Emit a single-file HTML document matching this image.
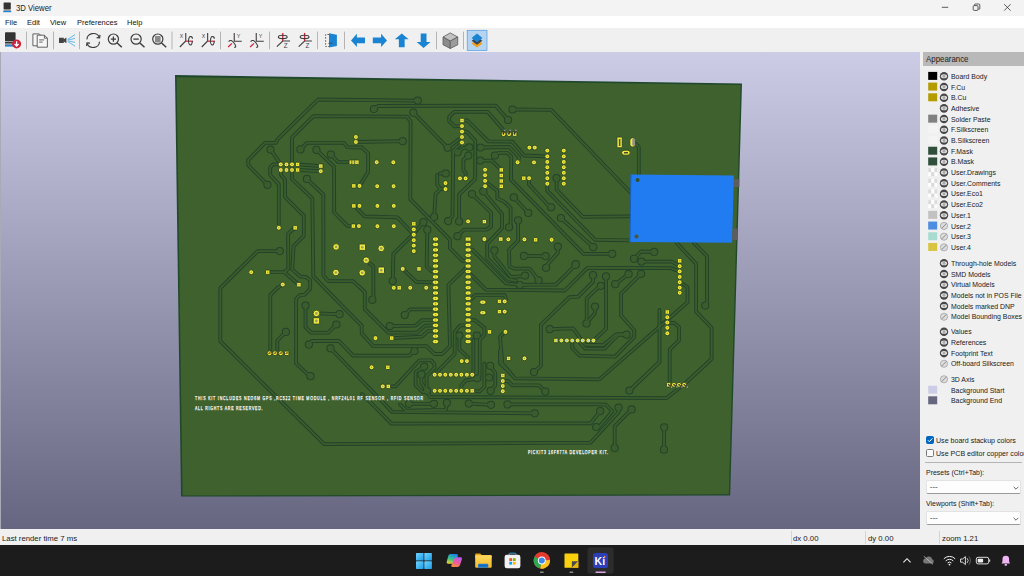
<!DOCTYPE html>
<html><head><meta charset="utf-8"><title>3D Viewer</title>
<style>
*{box-sizing:border-box;margin:0;padding:0}
html,body{width:1024px;height:576px;overflow:hidden;background:#f0f0f0;font-family:"Liberation Sans",sans-serif;color:#1a1a1a}
#title{position:absolute;left:0;top:0;width:1024px;height:16px;background:#f3f3f3}
#title .t{position:absolute;left:15.6px;top:3px;font-size:8.3px;line-height:10px;color:#222;transform:scaleX(.934);transform-origin:0 50%;white-space:nowrap}
#menu{position:absolute;left:0;top:16px;width:1024px;height:12px;background:#fff}
#menu span{position:absolute;top:1.6px;font-size:7.9px;line-height:10px;color:#111;transform:scaleX(.95);transform-origin:0 50%;white-space:nowrap}
#tool{position:absolute;left:0;top:28px;width:1024px;height:24px;background:#f0f0f0}
#canvas{position:absolute;left:1px;top:52px;width:919px;height:477px;background:linear-gradient(#cccce6,#666680)}
#panel{position:absolute;left:923px;top:52px;width:101px;height:478px;background:#f0f0f0;overflow:hidden}
#panel .hd{position:absolute;left:0;top:0;width:101px;height:14px;background:#b9b9b9}
#panel .hd span{position:absolute;left:2.5px;top:2.3px;font-size:8.4px;line-height:10px;color:#222;transform:scaleX(.94);transform-origin:0 50%;white-space:nowrap}
.row{position:absolute;left:0;height:10px;width:130px;font-size:7.9px;line-height:10px;white-space:nowrap;color:#1a1a1a}
.row .sw{position:absolute;left:5px;top:1px;width:9px;height:8px}
.row .tx{position:absolute;left:27.8px;top:1px;transform:scaleX(.875);transform-origin:0 50%}
#status{position:absolute;left:0;top:530px;width:1024px;height:15px;background:#f0f0f0;font-size:8px;line-height:10px}
#status i{position:absolute;top:1px;width:0.8px;height:13px;background:#d4d4d4}
#status span{position:absolute;top:3.6px;transform:scaleX(.97);transform-origin:0 50%;white-space:nowrap}
.cb{position:absolute;left:3px;width:8.4px;height:8.4px;border:0.7px solid #7a7a7a;border-radius:1.6px}
.lb{position:absolute;transform:scaleX(.87);transform-origin:0 50%;font-size:8px;line-height:10px;white-space:nowrap;color:#1a1a1a}
.dd{position:absolute;left:3.2px;width:95.2px;height:13.6px;background:#fdfdfd;border:0.6px solid #e2e2e2;border-bottom-color:#9a9a9a;border-radius:2px;font-size:8px;line-height:11px}
.dd span{position:absolute;left:2.6px;top:0px;color:#333}
.dd svg{position:absolute;right:1.6px;top:4.6px}
#task{position:absolute;left:0;top:545px;width:1024px;height:31px;background:#1c1c1c}
</style></head><body>
<div id="title"><svg width="1024" height="16" viewBox="0 0 1024 16" style="position:absolute;left:0;top:0">
<rect x="3.6" y="2.6" width="7.2" height="6.6" rx="0.6" fill="#333"/><rect x="3.6" y="9.6" width="7.2" height="0.9" fill="#444"/><rect x="3.2" y="10.9" width="8" height="1.3" fill="#1f86d6"/>
<g stroke="#333" stroke-width="0.8" fill="none"><path d="M941.8 7.3h6.4"/><rect x="973.2" y="5.6" width="4.8" height="4.8" rx="1"/><path d="M974.6 5.6v-1q0-.6.6-.6h3.6q1 0 1 1v3.6q0 .6-.6.6h-1"/><path d="M1004.2 4.2l6.4 6.4M1010.6 4.2l-6.4 6.4"/></g>
</svg><span class="t">3D Viewer</span></div>
<div id="menu"><span style="left:5px">File</span><span style="left:27px">Edit</span><span style="left:50px">View</span><span style="left:77px">Preferences</span><span style="left:127px">Help</span></div>
<div id="tool"><svg width="1024" height="24" viewBox="0 28 1024 24" style="position:absolute;left:0;top:0">
<rect x="26.1" y="31.6" width="0.8" height="17.6" fill="#a6a6a6"/>
<rect x="53.0" y="31.6" width="0.8" height="17.6" fill="#a6a6a6"/>
<rect x="79.0" y="31.6" width="0.8" height="17.6" fill="#a6a6a6"/>
<rect x="171.6" y="31.6" width="0.8" height="17.6" fill="#a6a6a6"/>
<rect x="220.1" y="31.6" width="0.8" height="17.6" fill="#a6a6a6"/>
<rect x="269.0" y="31.6" width="0.8" height="17.6" fill="#a6a6a6"/>
<rect x="317.1" y="31.6" width="0.8" height="17.6" fill="#a6a6a6"/>
<rect x="344.0" y="31.6" width="0.8" height="17.6" fill="#a6a6a6"/>
<rect x="436.1" y="31.6" width="0.8" height="17.6" fill="#a6a6a6"/>
<rect x="463.20000000000005" y="31.6" width="0.8" height="17.6" fill="#a6a6a6"/>
<rect x="5" y="32.2" width="10.6" height="9" rx="0.8" fill="#333"/><rect x="5" y="41.8" width="10" height="1.2" fill="#333"/><rect x="5" y="43.4" width="9" height="1.1" fill="#444"/><rect x="5" y="44.8" width="8.4" height="1.8" fill="#1f86d6"/>
<circle cx="16.6" cy="43.9" r="4.5" fill="#d0213c"/><path d="M16.6 41.2v4.4M14.6 44l2 2.1 2-2.1" stroke="#fff" stroke-width="1.3" fill="none"/>
<g fill="#f6f6f6" stroke="#555" stroke-width="0.9"><path d="M32.9 33.9h6.4l2 2v9.9h-8.4z"/><path d="M37.2 35.2h7.2l3 3v9h-10.2z"/><path d="M44.4 35.2v3h3" fill="none"/><path d="M39.2 39.9h5M39.2 42.1h3.4" fill="none"/></g>
<path d="M59 37.8h4.8v1.4l2.6-1.6v5.6l-2.6-1.6v1.4h-4.8z" fill="#444"/>
<g stroke="#55b6ea" stroke-width="0.9"><path d="M67.6 39.4L75 34.6M67.8 40L75 38.4M67.8 40.8L75 42.4M67.6 41.4L75 46.2"/></g>
<g fill="none" stroke="#3d3d3d" stroke-width="1.2"><path d="M87 39.4a6.3 5.6 0 0 1 12.2-2.2"/><path d="M99.4 41.6a6.3 5.6 0 0 1-12.2 2.2"/><path d="M96.6 37.6l3 .2.4-3"/><path d="M90 43.2l-3-.2-.4 3"/></g>
<g fill="none" stroke="#3d3d3d" stroke-width="1.2"><circle cx="113.4" cy="39.1" r="5.1"/><path d="M117.2 43l4.6 4.3" stroke-width="1.5"/><path d="M110.8 39.1h5.2M113.4 36.5v5.2" stroke-width="1.3"/></g>
<g fill="none" stroke="#3d3d3d" stroke-width="1.2"><circle cx="136.1" cy="39.1" r="5.1"/><path d="M139.9 43l4.6 4.3" stroke-width="1.5"/><path d="M133.4 39.1h5.4" stroke-width="1.3"/></g>
<g fill="none" stroke="#3d3d3d" stroke-width="1.2"><circle cx="157.8" cy="39.1" r="5.1"/><path d="M161.60000000000002 43l4.6 4.3" stroke-width="1.5"/><rect x="155" y="36" width="5.6" height="6.4" rx="0.8" fill="#8a8a8a" stroke="none"/></g>
<g fill="none" stroke="#3d3d3d" stroke-width="1.1"><path d="M185.75 32.9V41L179.85 47"/><path d="M185.75 41.2h7.2" stroke="#d0213c" stroke-width="1.2"/><path d="M191.75 37.6a1.9 4.3 0 1 0 .6 3.4" stroke-width="1.1"/><path d="M190.95 36.6l1.6.6-.3 1.700" stroke-width="0.9"/></g><text x="179.85" y="38" font-size="5.2" font-family="Liberation Sans,sans-serif" fill="#3d3d3d">X</text>
<g fill="none" stroke="#3d3d3d" stroke-width="1.1"><path d="M207.65 32.9V41L201.75 47"/><path d="M207.65 41.2h7.2" stroke="#d0213c" stroke-width="1.2"/><path d="M213.65 37.6a1.9 4.3 0 1 0 .6 3.4" stroke-width="1.1"/><path d="M212.85 36.6l1.6.6-.3 1.700" stroke-width="0.9"/></g><text x="201.75" y="38" font-size="5.2" font-family="Liberation Sans,sans-serif" fill="#3d3d3d">X</text>
<g fill="none" stroke="#3d3d3d" stroke-width="1.1"><path d="M234.25 32.9v8.4h7.5"/><path d="M231.95 43.4l-3.8 3.6" stroke="#d0213c" stroke-width="1.3"/><path d="M228.65 41.6c1.5-2.2 3.6-1 5.4 1.4s2.6 4.6.2 4.4" stroke-width="1.1"/></g><text x="236.85" y="38.1" font-size="5.4" font-family="Liberation Sans,sans-serif" fill="#3d3d3d">Y</text>
<g fill="none" stroke="#3d3d3d" stroke-width="1.1"><path d="M256.25 32.9v8.4h7.5"/><path d="M253.95 43.4l-3.8 3.6" stroke="#d0213c" stroke-width="1.3"/><path d="M250.65 41.6c1.5-2.2 3.6-1 5.4 1.4s2.6 4.6.2 4.4" stroke-width="1.1"/></g><text x="258.85" y="38.1" font-size="5.4" font-family="Liberation Sans,sans-serif" fill="#3d3d3d">Y</text>
<g fill="none" stroke="#3d3d3d" stroke-width="1.1"><path d="M290.05 41H282.75L276.85 46.6"/><path d="M282.75 32.9V41" stroke="#d0213c" stroke-width="1.3"/><ellipse cx="282.75" cy="36.9" rx="4.4" ry="1.7" stroke-width="1.1"/></g><text x="283.65" y="48.2" font-size="6.3" font-family="Liberation Sans,sans-serif" fill="#3d3d3d">Z</text>
<g fill="none" stroke="#3d3d3d" stroke-width="1.1"><path d="M311.90000000000003 41H304.6L298.70000000000005 46.6"/><path d="M304.6 32.9V41" stroke="#d0213c" stroke-width="1.3"/><ellipse cx="304.6" cy="36.9" rx="4.4" ry="1.7" stroke-width="1.1"/></g><text x="305.5" y="48.2" font-size="6.3" font-family="Liberation Sans,sans-serif" fill="#3d3d3d">Z</text>
<path d="M329 33.2l7.9 1.5v11.3l-7.9 1.5z" fill="#1b84d2"/><path d="M329 34.5h-3.4v12h3.4" fill="none" stroke="#555" stroke-width="0.9" stroke-dasharray="1.6 1.4"/><path d="M328.4 43.3h4.2" stroke="#444" stroke-width="0.8"/>
<path d="M351 40.4l5.9-6.6v3.7h8.1v5.8h-8.1v3.7z" fill="#1b84d2"/>
<path d="M387 40.4l-5.9-6.6v3.7h-8.3v5.8h8.3v3.7z" fill="#1b84d2"/>
<path d="M401.75 33.5l6.9 5.7h-4v8.05h-5.8v-8.05h-4z" fill="#1b84d2"/>
<path d="M423.6 47.9l6.9-5.9h-4v-8.5h-5.8v8.5h-4z" fill="#1b84d2"/>
<g stroke="#5a5a5a" stroke-width="0.8" stroke-linejoin="round"><path d="M450.25 32.9l7.5 4.1-7.5 4.1-7.25-4.1z" fill="#c2c2c2"/><path d="M443 37l7.25 4.1v7.4l-7.25-3.75z" fill="#8c8c8c"/><path d="M457.75 37l-7.5 4.1v7.4l7.5-3.75z" fill="#9c9c9c"/></g>
<rect x="467.2" y="30.3" width="19.8" height="20.2" fill="#b4d4f1" stroke="#4d9ce0" stroke-width="0.7"/>
<path d="M477 39.5l5.4 4-5.4 4-5.4-4z" fill="#f39c12"/><path d="M477 36.7l5.4 4-5.4 4-5.4-4z" fill="#3a4654"/><path d="M477 33.5l5.4 4.4-5.4 4.4-5.4-4.4z" fill="#1b84d2"/>
</svg></div>
<div style="position:absolute;left:0;top:52px;width:1px;height:477px;background:#a9a9b8"></div><div id="canvas"><svg width="919" height="478" viewBox="1 52 919 478" style="position:absolute;left:0;top:0">
<polygon points="175,75 742,83.5 730.2,495.5 181,496.6" fill="#20492c"/>
<polygon points="176.6,77.2 740.6,85 728.8,494.2 182.6,495.4" fill="#3f612e"/>
<g fill="none" stroke="#22432a" stroke-width="3.8" stroke-linejoin="round" stroke-linecap="round">
<polyline points="417.8,100.6 380.0,100.2 318.1,99.5 277.5,139.4 275.9,142.9 265.0,142.9 248.2,160.1 248.2,165.2 267.5,184.8"/>
<polyline points="373.9,109.0 378.0,106.0 495.6,105.6 508.1,120.0"/>
<polyline points="292.0,164.4 292.0,137.5 313.4,116.1 406.9,116.6 410.6,121.2 410.3,199.2 449.9,239.6 449.9,248.2 462.6,260.9 468.1,260.9"/>
<polyline points="292.0,164.4 292.0,179.0 312.3,198.4 313.3,276.4 350.0,313.9 361.7,325.6 361.7,333.4 373.4,346.2 426.6,346.2 434.4,354.0 442.2,354.0 450.0,346.2 448.4,285.0 467.5,266.4"/>
<polyline points="270.5,149.5 280.8,164.4"/>
<polyline points="300.5,149.4 307.0,142.8 343.9,142.8 347.3,147.2 362.2,147.5 368.1,153.3 368.1,172.0 359.5,185.9"/>
<polyline points="316.4,149.8 334.0,166.6 334.2,212.5 347.5,225.8 353.4,226.1"/>
<polyline points="330.9,154.5 338.0,161.9 351.2,162.2"/>
<polyline points="355.9,142.0 402.7,141.2"/>
<polyline points="297.6,164.4 320.8,166.1"/>
<polyline points="297.6,170.0 320.8,171.2"/>
<polyline points="280.8,164.4 273.0,164.4 270.2,167.5 270.2,175.0 278.8,184.4 278.8,227.8"/>
<polyline points="281.1,170.0 281.1,175.0 285.0,179.7 285.0,196.9 303.8,215.6 303.8,235.9 293.6,246.1 292.2,269.4 300.0,276.4 306.2,277.2 310.2,280.3 310.2,288.9 304.7,294.7 300.0,295.2 296.1,299.0 296.1,363.4 307.8,374.4"/>
<polyline points="306.9,178.9 323.3,194.5 323.4,275.6 328.1,281.1 353.1,281.1 364.8,292.0 364.8,309.2 388.3,332.7 417.2,332.7 425.0,325.6 435.5,325.3"/>
<polyline points="295.2,227.8 288.1,233.6 288.3,268.6 284.4,272.2 267.7,272.2"/>
<polyline points="284.4,272.2 298.9,284.7"/>
<polyline points="282.8,284.5 277.3,288.1 270.3,295.2 270.3,353.3"/>
<polyline points="279.8,251.1 257.7,251.1 220.3,288.1 220.3,341.2 324.1,444.1 590.5,442.7 618.6,412.2 618.6,407.5"/>
<polyline points="357.0,208.6 364.7,216.4 397.3,217.3 413.8,234.7"/>
<polyline points="413.3,112.7 447.7,147.8"/>
<polyline points="447.7,147.8 462.0,137.0"/>
<polyline points="462.0,142.5 454.6,149.4 453.2,151.4 452.5,216.0 448.1,221.1"/>
<polyline points="462.0,126.1 454.7,126.3 449.2,121.2 449.2,116.9 454.2,111.9 487.8,111.9 503.4,130.0 503.4,134.0"/>
<polyline points="462.0,120.5 467.5,120.5 488.3,141.3 512.1,141.6 524.0,155.5 545.0,156.4 547.3,156.4"/>
<polyline points="462.0,131.6 466.7,131.6 475.2,140.6 475.2,175.0 474.7,179.7 459.1,194.5 459.1,221.6"/>
<polyline points="512.5,109.5 551.2,109.8 630.5,192.5"/>
<polyline points="480.5,147.5 509.3,147.0 519.1,157.2 518.0,162.3"/>
<polyline points="494.9,155.5 498.6,152.8 507.4,152.8 511.3,156.7 511.0,179.7 583.6,253.9 612.2,253.9"/>
<polyline points="480.3,160.6 491.8,160.6 501.3,169.9"/>
<polyline points="457.6,152.3 463.4,147.9 469.3,147.3"/>
<polyline points="468.3,155.5 463.4,160.0 463.4,170.0 465.6,173.0 465.6,178.4"/>
<polyline points="445.8,173.5 440.0,173.5"/>
<polyline points="634.8,143.1 638.8,147.0 638.8,175.0"/>
<polyline points="437.2,175.0 437.2,184.4 440.0,188.5 445.5,189.0"/>
<polyline points="434.1,216.9 435.6,193.8 440.0,189.5"/>
<polyline points="423.4,222.2 413.8,233.6 393.4,253.9 392.7,281.1"/>
<polyline points="427.3,229.7 426.6,266.2 431.2,271.0 435.5,271.7"/>
<polyline points="472.0,194.1 491.1,212.5 491.1,226.6 486.4,229.7 463.8,229.7 457.5,236.2"/>
<polyline points="483.3,191.4 502.0,214.0 502.0,228.1 487.2,243.8 487.2,258.0 508.0,279.0 516.0,280.8"/>
<polyline points="484.8,181.0 497.3,191.0 497.3,198.4 504.4,201.9 510.6,208.1 510.6,225.0 509.0,227.3"/>
<polyline points="513.8,197.3 528.3,213.0"/>
<polyline points="518.1,220.3 518.1,240.6 509.0,250.0 509.4,266.2 514.0,268.6 529.7,268.6 538.6,280.3"/>
<polyline points="494.4,250.3 494.4,256.7 510.8,277.0 525.0,276.1"/>
<polyline points="523.9,255.9 545.6,256.2"/>
<polyline points="468.1,250.3 472.2,249.5 506.0,283.4 519.9,284.9"/>
<polyline points="529.0,178.1 529.0,184.4 548.4,205.5 551.1,207.3"/>
<polyline points="547.2,183.6 547.2,190.6 595.0,239.8 629.7,240.3"/>
<polyline points="560.9,218.0 593.3,247.2"/>
<polyline points="556.6,178.1 556.6,189.8 582.8,216.9 629.7,216.4"/>
<polyline points="557.8,246.6 557.8,253.0 546.9,265.0 546.1,267.8"/>
<polyline points="634.0,258.8 641.0,251.5 654.2,251.9"/>
<polyline points="641.4,261.6 671.9,261.6 679.7,266.2"/>
<polyline points="628.6,274.1 615.2,284.2"/>
<polyline points="641.1,273.8 621.1,293.6 621.1,315.5 634.2,330.2 634.2,337.2 615.0,356.7 579.7,355.6 572.2,347.8 572.2,340.5"/>
<polyline points="606.0,276.4 606.0,328.8 594.5,339.7"/>
<polyline points="679.7,282.2 687.5,287.0 687.5,302.2 599.4,379.4 514.8,378.3 502.3,363.4 500.0,336.6 505.5,331.9"/>
<polyline points="676.6,242.8 696.1,263.9 696.1,311.6 711.6,327.8 711.6,359.0 684.5,384.0 666.6,398.1 430.0,397.0 427.0,390.8"/>
<polyline points="693.8,242.8 707.0,256.1 707.0,303.8 705.2,305.6"/>
<polyline points="667.5,322.5 674.4,323.1 679.0,327.0 679.0,340.3 669.7,349.7 669.7,384.8"/>
<polyline points="659.5,310.0 659.5,362.2 629.4,390.6"/>
<polyline points="467.5,271.7 471.9,275.6 485.9,289.7 564.8,290.5 587.5,267.8 671.0,268.1 679.7,271.4"/>
<polyline points="575.5,265.0 555.9,284.7 531.2,284.7 519.8,285.0"/>
<polyline points="593.0,275.2 593.0,281.9 578.1,296.7 569.5,297.2 540.9,324.8 540.9,365.8 534.0,372.0"/>
<polyline points="600.0,285.8 586.7,298.3 586.7,322.5"/>
<polyline points="595.0,306.6 595.0,313.0 586.4,323.6"/>
<polyline points="549.7,329.2 573.0,328.4 585.0,344.7 603.1,345.2 616.4,334.2 626.6,334.7"/>
<polyline points="626.7,334.5 618.1,334.8 604.7,348.6 585.2,348.6 577.7,340.5"/>
<polyline points="305.5,305.6 305.5,327.2 310.9,332.7 328.1,332.7 336.4,324.5"/>
<polyline points="316.4,313.4 339.5,314.2"/>
<polyline points="285.9,331.9 277.3,340.5 277.3,353.3"/>
<polyline points="308.9,344.6 311.7,341.0 339.0,341.0 353.1,355.6 409.4,355.6 414.5,351.0"/>
<polyline points="330.5,348.3 392.2,411.9 534.8,413.3"/>
<polyline points="362.0,394.0 391.4,423.6 590.6,423.3 600.2,411.1"/>
<polyline points="366.4,260.8 373.4,266.2 373.4,296.7 372.3,299.8"/>
<polyline points="402.7,268.9 416.4,281.9 435.5,282.5"/>
<polyline points="404.7,315.0 410.2,309.4 435.5,309.4"/>
<polyline points="389.8,326.0 415.6,325.6 421.9,320.2 435.5,320.2"/>
<polyline points="391.7,338.1 421.9,336.6 428.1,330.8 435.5,330.8"/>
<polyline points="467.5,298.6 471.9,298.6 475.0,295.2 504.7,295.2 506.0,299.0 504.7,301.4"/>
<polyline points="467.5,320.2 475.0,320.2 484.4,328.0 484.4,335.0 479.7,339.7 479.7,376.0 477.3,378.3"/>
<polyline points="467.5,325.3 460.2,325.3 454.7,332.0 454.7,354.0 436.0,372.8"/>
<polyline points="459.4,335.5 459.4,349.4 468.0,357.2 466.9,361.1"/>
<polyline points="473.4,340.0 473.4,372.0"/>
<polyline points="477.3,378.3 465.6,380.6 461.4,385.2 461.4,390.8"/>
<polyline points="388.3,386.4 395.3,386.4 419.5,360.3 431.2,360.3 434.4,364.2 434.4,368.0 426.6,376.0 426.6,390.0"/>
<polyline points="424.2,366.6 415.6,372.0 415.6,385.3 423.0,392.3 427.0,390.8"/>
<polyline points="421.4,374.4 421.4,383.0 427.0,390.8"/>
<polyline points="490.2,365.8 495.3,372.8 495.3,385.3 490.6,390.8"/>
<polyline points="484.4,363.4 484.4,387.0 479.7,391.5 472.2,390.8"/>
<polyline points="500.0,350.0 500.0,363.4 510.0,372.8"/>
<polyline points="502.8,381.0 507.8,381.0 512.5,385.3 539.0,385.3 545.3,391.6"/>
<polyline points="409.0,403.8 433.9,403.8"/>
<polyline points="446.9,402.8 446.0,409.8 406.2,410.6 400.0,404.4"/>
<polyline points="468.8,403.6 491.0,404.8"/>
<polyline points="507.5,404.4 598.0,404.4 606.0,404.7 612.3,411.4 598.3,427.8"/>
<polyline points="631.6,409.4 614.7,426.2 614.7,448.1"/>
<polyline points="664.2,427.3 663.9,449.7"/>
<polyline points="629.4,390.8 657.8,363.4"/>
</g>
<g fill="#22432a">
<circle cx="417.8" cy="100.6" r="4.1"/>
<circle cx="373.9" cy="109.0" r="4.1"/>
<circle cx="270.5" cy="149.5" r="4.1"/>
<circle cx="300.5" cy="149.4" r="4.1"/>
<circle cx="316.4" cy="149.8" r="4.1"/>
<circle cx="330.9" cy="154.5" r="4.1"/>
<circle cx="402.7" cy="141.2" r="4.1"/>
<circle cx="413.3" cy="112.7" r="4.1"/>
<circle cx="447.7" cy="147.8" r="4.1"/>
<circle cx="508.1" cy="120.0" r="4.1"/>
<circle cx="512.5" cy="109.5" r="4.1"/>
<circle cx="480.5" cy="147.5" r="4.1"/>
<circle cx="469.3" cy="147.3" r="4.1"/>
<circle cx="457.6" cy="152.3" r="4.1"/>
<circle cx="468.3" cy="155.5" r="4.1"/>
<circle cx="494.9" cy="155.5" r="4.1"/>
<circle cx="480.3" cy="160.6" r="4.1"/>
<circle cx="445.8" cy="173.5" r="4.1"/>
<circle cx="267.5" cy="184.8" r="4.1"/>
<circle cx="306.9" cy="178.9" r="4.1"/>
<circle cx="279.8" cy="251.1" r="4.1"/>
<circle cx="423.4" cy="222.2" r="4.1"/>
<circle cx="427.3" cy="229.7" r="4.1"/>
<circle cx="434.1" cy="216.9" r="4.1"/>
<circle cx="448.1" cy="221.1" r="4.1"/>
<circle cx="459.1" cy="221.6" r="4.1"/>
<circle cx="472.0" cy="194.1" r="4.1"/>
<circle cx="457.5" cy="236.2" r="4.1"/>
<circle cx="483.3" cy="191.4" r="4.1"/>
<circle cx="509.0" cy="227.3" r="4.1"/>
<circle cx="513.8" cy="197.3" r="4.1"/>
<circle cx="528.3" cy="213.0" r="4.1"/>
<circle cx="518.1" cy="220.3" r="4.1"/>
<circle cx="494.4" cy="250.3" r="4.1"/>
<circle cx="523.9" cy="255.9" r="4.1"/>
<circle cx="545.6" cy="256.2" r="4.1"/>
<circle cx="551.1" cy="207.3" r="4.1"/>
<circle cx="593.3" cy="247.2" r="4.1"/>
<circle cx="560.9" cy="218.0" r="4.1"/>
<circle cx="556.6" cy="178.1" r="4.1"/>
<circle cx="557.8" cy="246.6" r="4.1"/>
<circle cx="575.8" cy="264.0" r="4.1"/>
<circle cx="612.2" cy="253.9" r="4.1"/>
<circle cx="654.2" cy="251.9" r="4.1"/>
<circle cx="634.0" cy="258.8" r="4.1"/>
<circle cx="641.4" cy="261.6" r="4.1"/>
<circle cx="628.6" cy="274.1" r="4.1"/>
<circle cx="615.2" cy="284.2" r="4.1"/>
<circle cx="641.1" cy="273.8" r="4.1"/>
<circle cx="606.0" cy="276.4" r="4.1"/>
<circle cx="600.8" cy="285.8" r="4.1"/>
<circle cx="705.2" cy="305.6" r="4.1"/>
<circle cx="546.1" cy="267.8" r="4.1"/>
<circle cx="575.5" cy="265.0" r="4.1"/>
<circle cx="525.0" cy="275.6" r="4.1"/>
<circle cx="538.6" cy="280.3" r="4.1"/>
<circle cx="519.8" cy="285.0" r="4.1"/>
<circle cx="593.0" cy="275.2" r="4.1"/>
<circle cx="586.4" cy="323.6" r="4.1"/>
<circle cx="595.0" cy="306.6" r="4.1"/>
<circle cx="549.7" cy="329.2" r="4.1"/>
<circle cx="626.6" cy="334.7" r="4.1"/>
<circle cx="305.5" cy="305.6" r="4.1"/>
<circle cx="336.4" cy="324.5" r="4.1"/>
<circle cx="339.5" cy="314.2" r="4.1"/>
<circle cx="285.9" cy="331.9" r="4.1"/>
<circle cx="308.9" cy="344.6" r="4.1"/>
<circle cx="330.5" cy="348.3" r="4.1"/>
<circle cx="310.5" cy="376.2" r="4.1"/>
<circle cx="372.3" cy="299.8" r="4.1"/>
<circle cx="392.7" cy="281.1" r="4.1"/>
<circle cx="404.7" cy="315.0" r="4.1"/>
<circle cx="389.8" cy="326.0" r="4.1"/>
<circle cx="459.4" cy="335.5" r="4.1"/>
<circle cx="476.9" cy="335.5" r="4.1"/>
<circle cx="414.5" cy="351.0" r="4.1"/>
<circle cx="424.2" cy="366.6" r="4.1"/>
<circle cx="421.4" cy="374.4" r="4.1"/>
<circle cx="427.0" cy="390.8" r="4.1"/>
<circle cx="477.3" cy="378.3" r="4.1"/>
<circle cx="490.2" cy="365.8" r="4.1"/>
<circle cx="489.0" cy="377.5" r="4.1"/>
<circle cx="490.6" cy="390.8" r="4.1"/>
<circle cx="534.0" cy="372.0" r="4.1"/>
<circle cx="545.3" cy="391.6" r="4.1"/>
<circle cx="629.4" cy="390.6" r="4.1"/>
<circle cx="409.0" cy="403.8" r="4.1"/>
<circle cx="433.9" cy="403.8" r="4.1"/>
<circle cx="446.9" cy="402.8" r="4.1"/>
<circle cx="468.8" cy="403.6" r="4.1"/>
<circle cx="491.0" cy="404.8" r="4.1"/>
<circle cx="507.5" cy="404.4" r="4.1"/>
<circle cx="534.8" cy="413.3" r="4.1"/>
<circle cx="600.2" cy="411.1" r="4.1"/>
<circle cx="618.6" cy="407.5" r="4.1"/>
<circle cx="631.6" cy="409.4" r="4.1"/>
<circle cx="596.2" cy="427.0" r="4.1"/>
<circle cx="614.7" cy="448.1" r="4.1"/>
<circle cx="664.2" cy="427.3" r="4.1"/>
<circle cx="663.9" cy="449.7" r="4.1"/>
</g>
<g fill="none" stroke="#3b5c2d" stroke-width="1.9" stroke-linejoin="round" stroke-linecap="round">
<polyline points="417.8,100.6 380.0,100.2 318.1,99.5 277.5,139.4 275.9,142.9 265.0,142.9 248.2,160.1 248.2,165.2 267.5,184.8"/>
<polyline points="373.9,109.0 378.0,106.0 495.6,105.6 508.1,120.0"/>
<polyline points="292.0,164.4 292.0,137.5 313.4,116.1 406.9,116.6 410.6,121.2 410.3,199.2 449.9,239.6 449.9,248.2 462.6,260.9 468.1,260.9"/>
<polyline points="292.0,164.4 292.0,179.0 312.3,198.4 313.3,276.4 350.0,313.9 361.7,325.6 361.7,333.4 373.4,346.2 426.6,346.2 434.4,354.0 442.2,354.0 450.0,346.2 448.4,285.0 467.5,266.4"/>
<polyline points="270.5,149.5 280.8,164.4"/>
<polyline points="300.5,149.4 307.0,142.8 343.9,142.8 347.3,147.2 362.2,147.5 368.1,153.3 368.1,172.0 359.5,185.9"/>
<polyline points="316.4,149.8 334.0,166.6 334.2,212.5 347.5,225.8 353.4,226.1"/>
<polyline points="330.9,154.5 338.0,161.9 351.2,162.2"/>
<polyline points="355.9,142.0 402.7,141.2"/>
<polyline points="297.6,164.4 320.8,166.1"/>
<polyline points="297.6,170.0 320.8,171.2"/>
<polyline points="280.8,164.4 273.0,164.4 270.2,167.5 270.2,175.0 278.8,184.4 278.8,227.8"/>
<polyline points="281.1,170.0 281.1,175.0 285.0,179.7 285.0,196.9 303.8,215.6 303.8,235.9 293.6,246.1 292.2,269.4 300.0,276.4 306.2,277.2 310.2,280.3 310.2,288.9 304.7,294.7 300.0,295.2 296.1,299.0 296.1,363.4 307.8,374.4"/>
<polyline points="306.9,178.9 323.3,194.5 323.4,275.6 328.1,281.1 353.1,281.1 364.8,292.0 364.8,309.2 388.3,332.7 417.2,332.7 425.0,325.6 435.5,325.3"/>
<polyline points="295.2,227.8 288.1,233.6 288.3,268.6 284.4,272.2 267.7,272.2"/>
<polyline points="284.4,272.2 298.9,284.7"/>
<polyline points="282.8,284.5 277.3,288.1 270.3,295.2 270.3,353.3"/>
<polyline points="279.8,251.1 257.7,251.1 220.3,288.1 220.3,341.2 324.1,444.1 590.5,442.7 618.6,412.2 618.6,407.5"/>
<polyline points="357.0,208.6 364.7,216.4 397.3,217.3 413.8,234.7"/>
<polyline points="413.3,112.7 447.7,147.8"/>
<polyline points="447.7,147.8 462.0,137.0"/>
<polyline points="462.0,142.5 454.6,149.4 453.2,151.4 452.5,216.0 448.1,221.1"/>
<polyline points="462.0,126.1 454.7,126.3 449.2,121.2 449.2,116.9 454.2,111.9 487.8,111.9 503.4,130.0 503.4,134.0"/>
<polyline points="462.0,120.5 467.5,120.5 488.3,141.3 512.1,141.6 524.0,155.5 545.0,156.4 547.3,156.4"/>
<polyline points="462.0,131.6 466.7,131.6 475.2,140.6 475.2,175.0 474.7,179.7 459.1,194.5 459.1,221.6"/>
<polyline points="512.5,109.5 551.2,109.8 630.5,192.5"/>
<polyline points="480.5,147.5 509.3,147.0 519.1,157.2 518.0,162.3"/>
<polyline points="494.9,155.5 498.6,152.8 507.4,152.8 511.3,156.7 511.0,179.7 583.6,253.9 612.2,253.9"/>
<polyline points="480.3,160.6 491.8,160.6 501.3,169.9"/>
<polyline points="457.6,152.3 463.4,147.9 469.3,147.3"/>
<polyline points="468.3,155.5 463.4,160.0 463.4,170.0 465.6,173.0 465.6,178.4"/>
<polyline points="445.8,173.5 440.0,173.5"/>
<polyline points="634.8,143.1 638.8,147.0 638.8,175.0"/>
<polyline points="437.2,175.0 437.2,184.4 440.0,188.5 445.5,189.0"/>
<polyline points="434.1,216.9 435.6,193.8 440.0,189.5"/>
<polyline points="423.4,222.2 413.8,233.6 393.4,253.9 392.7,281.1"/>
<polyline points="427.3,229.7 426.6,266.2 431.2,271.0 435.5,271.7"/>
<polyline points="472.0,194.1 491.1,212.5 491.1,226.6 486.4,229.7 463.8,229.7 457.5,236.2"/>
<polyline points="483.3,191.4 502.0,214.0 502.0,228.1 487.2,243.8 487.2,258.0 508.0,279.0 516.0,280.8"/>
<polyline points="484.8,181.0 497.3,191.0 497.3,198.4 504.4,201.9 510.6,208.1 510.6,225.0 509.0,227.3"/>
<polyline points="513.8,197.3 528.3,213.0"/>
<polyline points="518.1,220.3 518.1,240.6 509.0,250.0 509.4,266.2 514.0,268.6 529.7,268.6 538.6,280.3"/>
<polyline points="494.4,250.3 494.4,256.7 510.8,277.0 525.0,276.1"/>
<polyline points="523.9,255.9 545.6,256.2"/>
<polyline points="468.1,250.3 472.2,249.5 506.0,283.4 519.9,284.9"/>
<polyline points="529.0,178.1 529.0,184.4 548.4,205.5 551.1,207.3"/>
<polyline points="547.2,183.6 547.2,190.6 595.0,239.8 629.7,240.3"/>
<polyline points="560.9,218.0 593.3,247.2"/>
<polyline points="556.6,178.1 556.6,189.8 582.8,216.9 629.7,216.4"/>
<polyline points="557.8,246.6 557.8,253.0 546.9,265.0 546.1,267.8"/>
<polyline points="634.0,258.8 641.0,251.5 654.2,251.9"/>
<polyline points="641.4,261.6 671.9,261.6 679.7,266.2"/>
<polyline points="628.6,274.1 615.2,284.2"/>
<polyline points="641.1,273.8 621.1,293.6 621.1,315.5 634.2,330.2 634.2,337.2 615.0,356.7 579.7,355.6 572.2,347.8 572.2,340.5"/>
<polyline points="606.0,276.4 606.0,328.8 594.5,339.7"/>
<polyline points="679.7,282.2 687.5,287.0 687.5,302.2 599.4,379.4 514.8,378.3 502.3,363.4 500.0,336.6 505.5,331.9"/>
<polyline points="676.6,242.8 696.1,263.9 696.1,311.6 711.6,327.8 711.6,359.0 684.5,384.0 666.6,398.1 430.0,397.0 427.0,390.8"/>
<polyline points="693.8,242.8 707.0,256.1 707.0,303.8 705.2,305.6"/>
<polyline points="667.5,322.5 674.4,323.1 679.0,327.0 679.0,340.3 669.7,349.7 669.7,384.8"/>
<polyline points="659.5,310.0 659.5,362.2 629.4,390.6"/>
<polyline points="467.5,271.7 471.9,275.6 485.9,289.7 564.8,290.5 587.5,267.8 671.0,268.1 679.7,271.4"/>
<polyline points="575.5,265.0 555.9,284.7 531.2,284.7 519.8,285.0"/>
<polyline points="593.0,275.2 593.0,281.9 578.1,296.7 569.5,297.2 540.9,324.8 540.9,365.8 534.0,372.0"/>
<polyline points="600.0,285.8 586.7,298.3 586.7,322.5"/>
<polyline points="595.0,306.6 595.0,313.0 586.4,323.6"/>
<polyline points="549.7,329.2 573.0,328.4 585.0,344.7 603.1,345.2 616.4,334.2 626.6,334.7"/>
<polyline points="626.7,334.5 618.1,334.8 604.7,348.6 585.2,348.6 577.7,340.5"/>
<polyline points="305.5,305.6 305.5,327.2 310.9,332.7 328.1,332.7 336.4,324.5"/>
<polyline points="316.4,313.4 339.5,314.2"/>
<polyline points="285.9,331.9 277.3,340.5 277.3,353.3"/>
<polyline points="308.9,344.6 311.7,341.0 339.0,341.0 353.1,355.6 409.4,355.6 414.5,351.0"/>
<polyline points="330.5,348.3 392.2,411.9 534.8,413.3"/>
<polyline points="362.0,394.0 391.4,423.6 590.6,423.3 600.2,411.1"/>
<polyline points="366.4,260.8 373.4,266.2 373.4,296.7 372.3,299.8"/>
<polyline points="402.7,268.9 416.4,281.9 435.5,282.5"/>
<polyline points="404.7,315.0 410.2,309.4 435.5,309.4"/>
<polyline points="389.8,326.0 415.6,325.6 421.9,320.2 435.5,320.2"/>
<polyline points="391.7,338.1 421.9,336.6 428.1,330.8 435.5,330.8"/>
<polyline points="467.5,298.6 471.9,298.6 475.0,295.2 504.7,295.2 506.0,299.0 504.7,301.4"/>
<polyline points="467.5,320.2 475.0,320.2 484.4,328.0 484.4,335.0 479.7,339.7 479.7,376.0 477.3,378.3"/>
<polyline points="467.5,325.3 460.2,325.3 454.7,332.0 454.7,354.0 436.0,372.8"/>
<polyline points="459.4,335.5 459.4,349.4 468.0,357.2 466.9,361.1"/>
<polyline points="473.4,340.0 473.4,372.0"/>
<polyline points="477.3,378.3 465.6,380.6 461.4,385.2 461.4,390.8"/>
<polyline points="388.3,386.4 395.3,386.4 419.5,360.3 431.2,360.3 434.4,364.2 434.4,368.0 426.6,376.0 426.6,390.0"/>
<polyline points="424.2,366.6 415.6,372.0 415.6,385.3 423.0,392.3 427.0,390.8"/>
<polyline points="421.4,374.4 421.4,383.0 427.0,390.8"/>
<polyline points="490.2,365.8 495.3,372.8 495.3,385.3 490.6,390.8"/>
<polyline points="484.4,363.4 484.4,387.0 479.7,391.5 472.2,390.8"/>
<polyline points="500.0,350.0 500.0,363.4 510.0,372.8"/>
<polyline points="502.8,381.0 507.8,381.0 512.5,385.3 539.0,385.3 545.3,391.6"/>
<polyline points="409.0,403.8 433.9,403.8"/>
<polyline points="446.9,402.8 446.0,409.8 406.2,410.6 400.0,404.4"/>
<polyline points="468.8,403.6 491.0,404.8"/>
<polyline points="507.5,404.4 598.0,404.4 606.0,404.7 612.3,411.4 598.3,427.8"/>
<polyline points="631.6,409.4 614.7,426.2 614.7,448.1"/>
<polyline points="664.2,427.3 663.9,449.7"/>
<polyline points="629.4,390.8 657.8,363.4"/>
</g>
<g fill="#3b5c2d">
<circle cx="417.8" cy="100.6" r="3.1"/>
<circle cx="373.9" cy="109.0" r="3.1"/>
<circle cx="270.5" cy="149.5" r="3.1"/>
<circle cx="300.5" cy="149.4" r="3.1"/>
<circle cx="316.4" cy="149.8" r="3.1"/>
<circle cx="330.9" cy="154.5" r="3.1"/>
<circle cx="402.7" cy="141.2" r="3.1"/>
<circle cx="413.3" cy="112.7" r="3.1"/>
<circle cx="447.7" cy="147.8" r="3.1"/>
<circle cx="508.1" cy="120.0" r="3.1"/>
<circle cx="512.5" cy="109.5" r="3.1"/>
<circle cx="480.5" cy="147.5" r="3.1"/>
<circle cx="469.3" cy="147.3" r="3.1"/>
<circle cx="457.6" cy="152.3" r="3.1"/>
<circle cx="468.3" cy="155.5" r="3.1"/>
<circle cx="494.9" cy="155.5" r="3.1"/>
<circle cx="480.3" cy="160.6" r="3.1"/>
<circle cx="445.8" cy="173.5" r="3.1"/>
<circle cx="267.5" cy="184.8" r="3.1"/>
<circle cx="306.9" cy="178.9" r="3.1"/>
<circle cx="279.8" cy="251.1" r="3.1"/>
<circle cx="423.4" cy="222.2" r="3.1"/>
<circle cx="427.3" cy="229.7" r="3.1"/>
<circle cx="434.1" cy="216.9" r="3.1"/>
<circle cx="448.1" cy="221.1" r="3.1"/>
<circle cx="459.1" cy="221.6" r="3.1"/>
<circle cx="472.0" cy="194.1" r="3.1"/>
<circle cx="457.5" cy="236.2" r="3.1"/>
<circle cx="483.3" cy="191.4" r="3.1"/>
<circle cx="509.0" cy="227.3" r="3.1"/>
<circle cx="513.8" cy="197.3" r="3.1"/>
<circle cx="528.3" cy="213.0" r="3.1"/>
<circle cx="518.1" cy="220.3" r="3.1"/>
<circle cx="494.4" cy="250.3" r="3.1"/>
<circle cx="523.9" cy="255.9" r="3.1"/>
<circle cx="545.6" cy="256.2" r="3.1"/>
<circle cx="551.1" cy="207.3" r="3.1"/>
<circle cx="593.3" cy="247.2" r="3.1"/>
<circle cx="560.9" cy="218.0" r="3.1"/>
<circle cx="556.6" cy="178.1" r="3.1"/>
<circle cx="557.8" cy="246.6" r="3.1"/>
<circle cx="575.8" cy="264.0" r="3.1"/>
<circle cx="612.2" cy="253.9" r="3.1"/>
<circle cx="654.2" cy="251.9" r="3.1"/>
<circle cx="634.0" cy="258.8" r="3.1"/>
<circle cx="641.4" cy="261.6" r="3.1"/>
<circle cx="628.6" cy="274.1" r="3.1"/>
<circle cx="615.2" cy="284.2" r="3.1"/>
<circle cx="641.1" cy="273.8" r="3.1"/>
<circle cx="606.0" cy="276.4" r="3.1"/>
<circle cx="600.8" cy="285.8" r="3.1"/>
<circle cx="705.2" cy="305.6" r="3.1"/>
<circle cx="546.1" cy="267.8" r="3.1"/>
<circle cx="575.5" cy="265.0" r="3.1"/>
<circle cx="525.0" cy="275.6" r="3.1"/>
<circle cx="538.6" cy="280.3" r="3.1"/>
<circle cx="519.8" cy="285.0" r="3.1"/>
<circle cx="593.0" cy="275.2" r="3.1"/>
<circle cx="586.4" cy="323.6" r="3.1"/>
<circle cx="595.0" cy="306.6" r="3.1"/>
<circle cx="549.7" cy="329.2" r="3.1"/>
<circle cx="626.6" cy="334.7" r="3.1"/>
<circle cx="305.5" cy="305.6" r="3.1"/>
<circle cx="336.4" cy="324.5" r="3.1"/>
<circle cx="339.5" cy="314.2" r="3.1"/>
<circle cx="285.9" cy="331.9" r="3.1"/>
<circle cx="308.9" cy="344.6" r="3.1"/>
<circle cx="330.5" cy="348.3" r="3.1"/>
<circle cx="310.5" cy="376.2" r="3.1"/>
<circle cx="372.3" cy="299.8" r="3.1"/>
<circle cx="392.7" cy="281.1" r="3.1"/>
<circle cx="404.7" cy="315.0" r="3.1"/>
<circle cx="389.8" cy="326.0" r="3.1"/>
<circle cx="459.4" cy="335.5" r="3.1"/>
<circle cx="476.9" cy="335.5" r="3.1"/>
<circle cx="414.5" cy="351.0" r="3.1"/>
<circle cx="424.2" cy="366.6" r="3.1"/>
<circle cx="421.4" cy="374.4" r="3.1"/>
<circle cx="427.0" cy="390.8" r="3.1"/>
<circle cx="477.3" cy="378.3" r="3.1"/>
<circle cx="490.2" cy="365.8" r="3.1"/>
<circle cx="489.0" cy="377.5" r="3.1"/>
<circle cx="490.6" cy="390.8" r="3.1"/>
<circle cx="534.0" cy="372.0" r="3.1"/>
<circle cx="545.3" cy="391.6" r="3.1"/>
<circle cx="629.4" cy="390.6" r="3.1"/>
<circle cx="409.0" cy="403.8" r="3.1"/>
<circle cx="433.9" cy="403.8" r="3.1"/>
<circle cx="446.9" cy="402.8" r="3.1"/>
<circle cx="468.8" cy="403.6" r="3.1"/>
<circle cx="491.0" cy="404.8" r="3.1"/>
<circle cx="507.5" cy="404.4" r="3.1"/>
<circle cx="534.8" cy="413.3" r="3.1"/>
<circle cx="600.2" cy="411.1" r="3.1"/>
<circle cx="618.6" cy="407.5" r="3.1"/>
<circle cx="631.6" cy="409.4" r="3.1"/>
<circle cx="596.2" cy="427.0" r="3.1"/>
<circle cx="614.7" cy="448.1" r="3.1"/>
<circle cx="664.2" cy="427.3" r="3.1"/>
<circle cx="663.9" cy="449.7" r="3.1"/>
</g>
<g fill="#efe93a" stroke="#2b4622" stroke-width="0.9">
<circle cx="280.8" cy="164.4" r="2.45"/>
<circle cx="286.5" cy="164.4" r="2.45"/>
<circle cx="292.0" cy="164.4" r="2.45"/>
<circle cx="280.8" cy="170.0" r="2.45"/>
<circle cx="286.5" cy="170.0" r="2.45"/>
<circle cx="292.0" cy="170.0" r="2.45"/>
<rect x="295.4" y="162.2" width="4.4" height="4.4" rx="0.6"/>
<rect x="295.4" y="167.8" width="4.4" height="4.4" rx="0.6"/>
<rect x="318.6" y="163.9" width="4.4" height="4.4" rx="0.6"/>
<circle cx="320.8" cy="171.2" r="2.45"/>
<circle cx="355.9" cy="137.0" r="2.45"/>
<circle cx="355.9" cy="142.0" r="2.45"/>
<rect x="349.1" y="160.0" width="4.4" height="4.4" rx="0.6"/>
<rect x="351.8" y="160.0" width="4.4" height="4.4" rx="0.6"/>
<rect x="354.7" y="160.0" width="4.4" height="4.4" rx="0.6"/>
<circle cx="376.7" cy="162.2" r="2.45"/>
<circle cx="393.3" cy="162.3" r="2.45"/>
<rect x="459.8" y="118.3" width="4.4" height="4.4" rx="0.6"/>
<circle cx="462.0" cy="126.1" r="2.45"/>
<circle cx="462.0" cy="131.6" r="2.45"/>
<circle cx="462.0" cy="137.0" r="2.45"/>
<circle cx="462.0" cy="142.5" r="2.45"/>
<circle cx="503.6" cy="134.1" r="2.45"/>
<circle cx="509.1" cy="134.1" r="2.45"/>
<rect x="512.5" y="131.9" width="4.4" height="4.4" rx="0.6"/>
<circle cx="529.4" cy="147.6" r="2.45"/>
<circle cx="534.8" cy="147.6" r="2.45"/>
<circle cx="517.6" cy="162.3" r="2.45"/>
<circle cx="534.0" cy="162.4" r="2.45"/>
<circle cx="485.1" cy="169.7" r="2.45"/>
<circle cx="485.1" cy="175.3" r="2.45"/>
<circle cx="485.1" cy="180.8" r="2.45"/>
<circle cx="485.1" cy="186.2" r="2.45"/>
<rect x="499.1" y="167.7" width="4.4" height="4.4" rx="0.6"/>
<rect x="499.1" y="173.3" width="4.4" height="4.4" rx="0.6"/>
<rect x="499.1" y="178.8" width="4.4" height="4.4" rx="0.6"/>
<rect x="499.1" y="184.1" width="4.4" height="4.4" rx="0.6"/>
<circle cx="460.0" cy="178.4" r="2.45"/>
<circle cx="465.6" cy="178.4" r="2.45"/>
<rect x="521.6" y="176.0" width="4.4" height="4.4" rx="0.6"/>
<circle cx="529.1" cy="178.2" r="2.45"/>
<circle cx="547.3" cy="150.6" r="2.45"/>
<circle cx="563.8" cy="150.6" r="2.45"/>
<circle cx="547.3" cy="156.4" r="2.45"/>
<circle cx="563.8" cy="156.4" r="2.45"/>
<circle cx="547.3" cy="161.9" r="2.45"/>
<circle cx="563.8" cy="161.9" r="2.45"/>
<circle cx="547.3" cy="167.3" r="2.45"/>
<circle cx="563.8" cy="167.3" r="2.45"/>
<circle cx="547.3" cy="172.8" r="2.45"/>
<circle cx="563.8" cy="172.8" r="2.45"/>
<circle cx="547.3" cy="178.3" r="2.45"/>
<circle cx="563.8" cy="178.3" r="2.45"/>
<circle cx="547.3" cy="183.7" r="2.45"/>
<circle cx="563.8" cy="183.7" r="2.45"/>
<rect x="351.6" y="183.7" width="4.4" height="4.4" rx="0.6"/>
<rect x="351.6" y="203.7" width="4.4" height="4.4" rx="0.6"/>
<rect x="351.2" y="223.9" width="4.4" height="4.4" rx="0.6"/>
<circle cx="359.5" cy="185.9" r="2.45"/>
<circle cx="359.5" cy="205.9" r="2.45"/>
<circle cx="358.9" cy="226.1" r="2.45"/>
<circle cx="377.2" cy="186.2" r="2.45"/>
<circle cx="393.6" cy="186.2" r="2.45"/>
<circle cx="377.4" cy="205.9" r="2.45"/>
<circle cx="393.8" cy="205.9" r="2.45"/>
<circle cx="377.4" cy="226.2" r="2.45"/>
<circle cx="393.8" cy="226.2" r="2.45"/>
<circle cx="278.8" cy="227.8" r="2.45"/>
<rect x="293.0" y="225.6" width="4.4" height="4.4" rx="0.6"/>
<circle cx="336.1" cy="246.9" r="3.3"/>
<circle cx="366.2" cy="260.2" r="3.3"/>
<circle cx="381.2" cy="248.4" r="3.3"/>
<circle cx="335.9" cy="272.5" r="3.3"/>
<circle cx="362.2" cy="272.8" r="3.3"/>
<rect x="359.1" y="244.0" width="6.4" height="6.4" rx="0.8"/>
<rect x="378.1" y="267.0" width="6.4" height="6.4" rx="0.8"/>
<circle cx="445.5" cy="183.1" r="2.45"/>
<circle cx="445.5" cy="189.1" r="2.45"/>
<rect x="411.6" y="221.6" width="4.4" height="4.4" rx="0.6"/>
<circle cx="413.8" cy="229.4" r="2.45"/>
<circle cx="413.8" cy="234.7" r="2.45"/>
<circle cx="413.8" cy="240.2" r="2.45"/>
<circle cx="413.8" cy="245.6" r="2.45"/>
<circle cx="413.8" cy="251.1" r="2.45"/>
<circle cx="468.1" cy="221.4" r="2.45"/>
<circle cx="484.4" cy="239.1" r="2.45"/>
<circle cx="508.3" cy="239.4" r="2.45"/>
<circle cx="524.4" cy="239.4" r="2.45"/>
<circle cx="551.6" cy="239.8" r="2.45"/>
<rect x="482.2" y="219.4" width="4.4" height="4.4" rx="0.6"/>
<rect x="498.6" y="236.9" width="4.4" height="4.4" rx="0.6"/>
<rect x="533.4" y="237.6" width="4.4" height="4.4" rx="0.6"/>
<rect x="465.2" y="237.0" width="5.8" height="4.2" rx="0.6"/>
<rect x="432.4" y="237.0" width="6.3" height="4.2" rx="2.1"/>
<rect x="465.0" y="242.4" width="6.3" height="4.2" rx="2.1"/>
<rect x="432.4" y="242.4" width="6.3" height="4.2" rx="2.1"/>
<rect x="465.0" y="247.8" width="6.3" height="4.2" rx="2.1"/>
<rect x="432.4" y="247.8" width="6.3" height="4.2" rx="2.1"/>
<rect x="465.0" y="253.2" width="6.3" height="4.2" rx="2.1"/>
<rect x="432.4" y="253.2" width="6.3" height="4.2" rx="2.1"/>
<rect x="465.0" y="258.6" width="6.3" height="4.2" rx="2.1"/>
<rect x="432.4" y="258.6" width="6.3" height="4.2" rx="2.1"/>
<rect x="465.0" y="264.0" width="6.3" height="4.2" rx="2.1"/>
<rect x="432.4" y="264.0" width="6.3" height="4.2" rx="2.1"/>
<rect x="465.0" y="269.4" width="6.3" height="4.2" rx="2.1"/>
<rect x="432.4" y="269.4" width="6.3" height="4.2" rx="2.1"/>
<rect x="465.0" y="274.8" width="6.3" height="4.2" rx="2.1"/>
<rect x="432.4" y="274.8" width="6.3" height="4.2" rx="2.1"/>
<rect x="465.0" y="280.2" width="6.3" height="4.2" rx="2.1"/>
<rect x="432.4" y="280.2" width="6.3" height="4.2" rx="2.1"/>
<rect x="465.0" y="285.6" width="6.3" height="4.2" rx="2.1"/>
<rect x="432.4" y="285.6" width="6.3" height="4.2" rx="2.1"/>
<rect x="465.0" y="290.9" width="6.3" height="4.2" rx="2.1"/>
<rect x="432.4" y="290.9" width="6.3" height="4.2" rx="2.1"/>
<rect x="465.0" y="296.3" width="6.3" height="4.2" rx="2.1"/>
<rect x="432.4" y="296.3" width="6.3" height="4.2" rx="2.1"/>
<rect x="465.0" y="301.7" width="6.3" height="4.2" rx="2.1"/>
<rect x="432.4" y="301.7" width="6.3" height="4.2" rx="2.1"/>
<rect x="465.0" y="307.1" width="6.3" height="4.2" rx="2.1"/>
<rect x="432.4" y="307.1" width="6.3" height="4.2" rx="2.1"/>
<rect x="465.0" y="312.5" width="6.3" height="4.2" rx="2.1"/>
<rect x="432.4" y="312.5" width="6.3" height="4.2" rx="2.1"/>
<rect x="465.0" y="317.9" width="6.3" height="4.2" rx="2.1"/>
<rect x="432.4" y="317.9" width="6.3" height="4.2" rx="2.1"/>
<rect x="465.0" y="323.3" width="6.3" height="4.2" rx="2.1"/>
<rect x="432.4" y="323.3" width="6.3" height="4.2" rx="2.1"/>
<rect x="465.0" y="328.7" width="6.3" height="4.2" rx="2.1"/>
<rect x="432.4" y="328.7" width="6.3" height="4.2" rx="2.1"/>
<rect x="465.0" y="334.1" width="6.3" height="4.2" rx="2.1"/>
<rect x="432.4" y="334.1" width="6.3" height="4.2" rx="2.1"/>
<rect x="465.0" y="339.5" width="6.3" height="4.2" rx="2.1"/>
<rect x="432.4" y="339.5" width="6.3" height="4.2" rx="2.1"/>
<circle cx="251.2" cy="272.2" r="2.45"/>
<circle cx="282.8" cy="284.5" r="2.45"/>
<rect x="265.5" y="270.0" width="4.4" height="4.4" rx="0.6"/>
<rect x="296.7" y="282.5" width="4.4" height="4.4" rx="0.6"/>
<circle cx="316.4" cy="313.4" r="3.3"/>
<rect x="313.2" y="317.7" width="6.4" height="6.4" rx="0.8"/>
<circle cx="402.7" cy="268.9" r="2.45"/>
<circle cx="393.8" cy="287.8" r="2.45"/>
<circle cx="410.2" cy="287.8" r="2.45"/>
<circle cx="426.2" cy="287.8" r="2.45"/>
<circle cx="375.5" cy="338.1" r="2.45"/>
<rect x="416.8" y="266.7" width="4.4" height="4.4" rx="0.6"/>
<rect x="397.0" y="285.6" width="4.4" height="4.4" rx="0.6"/>
<rect x="389.5" y="335.9" width="4.4" height="4.4" rx="0.6"/>
<rect x="479.7" y="300.1" width="6.3" height="4.2" rx="2.1"/>
<rect x="479.7" y="310.6" width="6.3" height="4.2" rx="2.1"/>
<rect x="497.3" y="299.2" width="4.4" height="4.4" rx="0.6"/>
<rect x="497.3" y="309.4" width="4.4" height="4.4" rx="0.6"/>
<rect x="487.3" y="329.7" width="4.4" height="4.4" rx="0.6"/>
<circle cx="504.7" cy="301.4" r="2.45"/>
<circle cx="504.7" cy="311.6" r="2.45"/>
<circle cx="505.5" cy="331.9" r="2.45"/>
<rect x="677.5" y="258.6" width="4.4" height="4.4" rx="0.6"/>
<circle cx="679.7" cy="266.2" r="2.45"/>
<circle cx="679.7" cy="271.4" r="2.45"/>
<circle cx="679.7" cy="276.9" r="2.45"/>
<circle cx="679.7" cy="282.2" r="2.45"/>
<circle cx="679.7" cy="287.7" r="2.45"/>
<circle cx="679.7" cy="292.8" r="2.45"/>
<rect x="665.1" y="309.8" width="4.4" height="4.4" rx="0.6"/>
<circle cx="667.3" cy="317.3" r="2.45"/>
<circle cx="667.3" cy="322.5" r="2.45"/>
<circle cx="667.3" cy="327.8" r="2.45"/>
<circle cx="667.3" cy="333.3" r="2.45"/>
<rect x="553.7" y="338.3" width="4.4" height="4.4" rx="0.6"/>
<circle cx="561.4" cy="340.5" r="2.45"/>
<circle cx="566.9" cy="340.5" r="2.45"/>
<circle cx="572.2" cy="340.5" r="2.45"/>
<circle cx="577.7" cy="340.5" r="2.45"/>
<circle cx="582.8" cy="340.5" r="2.45"/>
<circle cx="588.3" cy="340.5" r="2.45"/>
<circle cx="593.4" cy="340.5" r="2.45"/>
<rect x="666.4" y="382.6" width="4.4" height="4.4" rx="0.6"/>
<circle cx="673.9" cy="384.8" r="2.45"/>
<circle cx="679.0" cy="384.8" r="2.45"/>
<circle cx="684.2" cy="384.8" r="2.45"/>
<circle cx="269.5" cy="353.3" r="2.45"/>
<circle cx="275.0" cy="353.3" r="2.45"/>
<circle cx="280.8" cy="353.3" r="2.45"/>
<rect x="284.5" y="351.1" width="4.4" height="4.4" rx="0.6"/>
<circle cx="371.6" cy="367.3" r="2.45"/>
<circle cx="382.8" cy="386.4" r="2.45"/>
<circle cx="461.7" cy="361.1" r="2.45"/>
<circle cx="466.9" cy="361.1" r="2.45"/>
<circle cx="524.5" cy="358.4" r="2.45"/>
<rect x="385.6" y="365.1" width="4.4" height="4.4" rx="0.6"/>
<rect x="386.1" y="384.2" width="4.4" height="4.4" rx="0.6"/>
<rect x="506.4" y="356.2" width="4.4" height="4.4" rx="0.6"/>
<circle cx="434.7" cy="374.7" r="2.45"/>
<circle cx="434.7" cy="390.8" r="2.45"/>
<circle cx="440.0" cy="374.7" r="2.45"/>
<circle cx="440.0" cy="390.8" r="2.45"/>
<circle cx="445.3" cy="374.7" r="2.45"/>
<circle cx="445.3" cy="390.8" r="2.45"/>
<circle cx="450.8" cy="374.7" r="2.45"/>
<circle cx="450.8" cy="390.8" r="2.45"/>
<circle cx="456.2" cy="374.7" r="2.45"/>
<circle cx="456.2" cy="390.8" r="2.45"/>
<circle cx="461.4" cy="374.7" r="2.45"/>
<circle cx="461.4" cy="390.8" r="2.45"/>
<circle cx="466.9" cy="374.7" r="2.45"/>
<circle cx="466.9" cy="390.8" r="2.45"/>
<circle cx="472.2" cy="374.7" r="2.45"/>
<rect x="470.0" y="388.6" width="4.4" height="4.4" rx="0.6"/>
<rect x="500.6" y="373.3" width="4.4" height="4.4" rx="0.6"/>
<circle cx="502.8" cy="381.0" r="2.45"/>
<circle cx="502.8" cy="386.0" r="2.45"/>
<circle cx="502.8" cy="391.2" r="2.45"/>
</g>
<g fill="#9c9c62">
<circle cx="280.8" cy="164.4" r="0.72"/>
<circle cx="286.5" cy="164.4" r="0.72"/>
<circle cx="292.0" cy="164.4" r="0.72"/>
<circle cx="280.8" cy="170.0" r="0.72"/>
<circle cx="286.5" cy="170.0" r="0.72"/>
<circle cx="292.0" cy="170.0" r="0.72"/>
<circle cx="297.6" cy="164.4" r="0.72"/>
<circle cx="297.6" cy="170.0" r="0.72"/>
<circle cx="320.8" cy="166.1" r="0.72"/>
<circle cx="320.8" cy="171.2" r="0.72"/>
<circle cx="355.9" cy="137.0" r="0.72"/>
<circle cx="355.9" cy="142.0" r="0.72"/>
<circle cx="351.2" cy="162.2" r="0.72"/>
<circle cx="354.0" cy="162.2" r="0.72"/>
<circle cx="356.9" cy="162.2" r="0.72"/>
<circle cx="376.7" cy="162.2" r="0.72"/>
<circle cx="393.3" cy="162.3" r="0.72"/>
<circle cx="462.0" cy="120.5" r="0.72"/>
<circle cx="462.0" cy="126.1" r="0.72"/>
<circle cx="462.0" cy="131.6" r="0.72"/>
<circle cx="462.0" cy="137.0" r="0.72"/>
<circle cx="462.0" cy="142.5" r="0.72"/>
<circle cx="503.6" cy="134.1" r="0.72"/>
<circle cx="509.1" cy="134.1" r="0.72"/>
<circle cx="514.7" cy="134.1" r="0.72"/>
<circle cx="529.4" cy="147.6" r="0.72"/>
<circle cx="534.8" cy="147.6" r="0.72"/>
<circle cx="517.6" cy="162.3" r="0.72"/>
<circle cx="534.0" cy="162.4" r="0.72"/>
<circle cx="485.1" cy="169.7" r="0.72"/>
<circle cx="485.1" cy="175.3" r="0.72"/>
<circle cx="485.1" cy="180.8" r="0.72"/>
<circle cx="485.1" cy="186.2" r="0.72"/>
<circle cx="501.3" cy="169.9" r="0.72"/>
<circle cx="501.3" cy="175.5" r="0.72"/>
<circle cx="501.3" cy="181.0" r="0.72"/>
<circle cx="501.3" cy="186.2" r="0.72"/>
<circle cx="460.0" cy="178.4" r="0.72"/>
<circle cx="465.6" cy="178.4" r="0.72"/>
<circle cx="523.8" cy="178.2" r="0.72"/>
<circle cx="529.1" cy="178.2" r="0.72"/>
<circle cx="547.3" cy="150.6" r="0.72"/>
<circle cx="563.8" cy="150.6" r="0.72"/>
<circle cx="547.3" cy="156.4" r="0.72"/>
<circle cx="563.8" cy="156.4" r="0.72"/>
<circle cx="547.3" cy="161.9" r="0.72"/>
<circle cx="563.8" cy="161.9" r="0.72"/>
<circle cx="547.3" cy="167.3" r="0.72"/>
<circle cx="563.8" cy="167.3" r="0.72"/>
<circle cx="547.3" cy="172.8" r="0.72"/>
<circle cx="563.8" cy="172.8" r="0.72"/>
<circle cx="547.3" cy="178.3" r="0.72"/>
<circle cx="563.8" cy="178.3" r="0.72"/>
<circle cx="547.3" cy="183.7" r="0.72"/>
<circle cx="563.8" cy="183.7" r="0.72"/>
<circle cx="353.8" cy="185.9" r="0.72"/>
<circle cx="353.8" cy="205.9" r="0.72"/>
<circle cx="353.4" cy="226.1" r="0.72"/>
<circle cx="359.5" cy="185.9" r="0.72"/>
<circle cx="359.5" cy="205.9" r="0.72"/>
<circle cx="358.9" cy="226.1" r="0.72"/>
<circle cx="377.2" cy="186.2" r="0.72"/>
<circle cx="393.6" cy="186.2" r="0.72"/>
<circle cx="377.4" cy="205.9" r="0.72"/>
<circle cx="393.8" cy="205.9" r="0.72"/>
<circle cx="377.4" cy="226.2" r="0.72"/>
<circle cx="393.8" cy="226.2" r="0.72"/>
<circle cx="278.8" cy="227.8" r="0.72"/>
<circle cx="295.2" cy="227.8" r="0.72"/>
<circle cx="336.1" cy="246.9" r="1.3"/>
<circle cx="366.2" cy="260.2" r="1.3"/>
<circle cx="381.2" cy="248.4" r="1.3"/>
<circle cx="335.9" cy="272.5" r="1.3"/>
<circle cx="362.2" cy="272.8" r="1.3"/>
<circle cx="362.3" cy="247.2" r="1.3"/>
<circle cx="381.2" cy="270.2" r="1.3"/>
<circle cx="445.5" cy="183.1" r="0.72"/>
<circle cx="445.5" cy="189.1" r="0.72"/>
<circle cx="413.8" cy="223.8" r="0.72"/>
<circle cx="413.8" cy="229.4" r="0.72"/>
<circle cx="413.8" cy="234.7" r="0.72"/>
<circle cx="413.8" cy="240.2" r="0.72"/>
<circle cx="413.8" cy="245.6" r="0.72"/>
<circle cx="413.8" cy="251.1" r="0.72"/>
<circle cx="468.1" cy="221.4" r="0.72"/>
<circle cx="484.4" cy="239.1" r="0.72"/>
<circle cx="508.3" cy="239.4" r="0.72"/>
<circle cx="524.4" cy="239.4" r="0.72"/>
<circle cx="551.6" cy="239.8" r="0.72"/>
<circle cx="484.4" cy="221.6" r="0.72"/>
<circle cx="500.8" cy="239.1" r="0.72"/>
<circle cx="535.6" cy="239.8" r="0.72"/>
<circle cx="468.1" cy="239.1" r="0.72"/>
<circle cx="435.5" cy="239.1" r="0.72"/>
<circle cx="468.1" cy="244.5" r="0.72"/>
<circle cx="435.5" cy="244.5" r="0.72"/>
<circle cx="468.1" cy="249.9" r="0.72"/>
<circle cx="435.5" cy="249.9" r="0.72"/>
<circle cx="468.1" cy="255.3" r="0.72"/>
<circle cx="435.5" cy="255.3" r="0.72"/>
<circle cx="468.1" cy="260.7" r="0.72"/>
<circle cx="435.5" cy="260.7" r="0.72"/>
<circle cx="468.1" cy="266.1" r="0.72"/>
<circle cx="435.5" cy="266.1" r="0.72"/>
<circle cx="468.1" cy="271.5" r="0.72"/>
<circle cx="435.5" cy="271.5" r="0.72"/>
<circle cx="468.1" cy="276.9" r="0.72"/>
<circle cx="435.5" cy="276.9" r="0.72"/>
<circle cx="468.1" cy="282.3" r="0.72"/>
<circle cx="435.5" cy="282.3" r="0.72"/>
<circle cx="468.1" cy="287.7" r="0.72"/>
<circle cx="435.5" cy="287.7" r="0.72"/>
<circle cx="468.1" cy="293.1" r="0.72"/>
<circle cx="435.5" cy="293.1" r="0.72"/>
<circle cx="468.1" cy="298.4" r="0.72"/>
<circle cx="435.5" cy="298.4" r="0.72"/>
<circle cx="468.1" cy="303.8" r="0.72"/>
<circle cx="435.5" cy="303.8" r="0.72"/>
<circle cx="468.1" cy="309.2" r="0.72"/>
<circle cx="435.5" cy="309.2" r="0.72"/>
<circle cx="468.1" cy="314.6" r="0.72"/>
<circle cx="435.5" cy="314.6" r="0.72"/>
<circle cx="468.1" cy="320.0" r="0.72"/>
<circle cx="435.5" cy="320.0" r="0.72"/>
<circle cx="468.1" cy="325.4" r="0.72"/>
<circle cx="435.5" cy="325.4" r="0.72"/>
<circle cx="468.1" cy="330.8" r="0.72"/>
<circle cx="435.5" cy="330.8" r="0.72"/>
<circle cx="468.1" cy="336.2" r="0.72"/>
<circle cx="435.5" cy="336.2" r="0.72"/>
<circle cx="468.1" cy="341.6" r="0.72"/>
<circle cx="435.5" cy="341.6" r="0.72"/>
<circle cx="251.2" cy="272.2" r="0.72"/>
<circle cx="282.8" cy="284.5" r="0.72"/>
<circle cx="267.7" cy="272.2" r="0.72"/>
<circle cx="298.9" cy="284.7" r="0.72"/>
<circle cx="316.4" cy="313.4" r="1.3"/>
<circle cx="316.4" cy="320.9" r="1.3"/>
<circle cx="402.7" cy="268.9" r="0.72"/>
<circle cx="393.8" cy="287.8" r="0.72"/>
<circle cx="410.2" cy="287.8" r="0.72"/>
<circle cx="426.2" cy="287.8" r="0.72"/>
<circle cx="375.5" cy="338.1" r="0.72"/>
<circle cx="419.0" cy="268.9" r="0.72"/>
<circle cx="399.2" cy="287.8" r="0.72"/>
<circle cx="391.7" cy="338.1" r="0.72"/>
<circle cx="482.8" cy="302.2" r="0.72"/>
<circle cx="482.8" cy="312.7" r="0.72"/>
<circle cx="499.5" cy="301.4" r="0.72"/>
<circle cx="499.5" cy="311.6" r="0.72"/>
<circle cx="489.5" cy="331.9" r="0.72"/>
<circle cx="504.7" cy="301.4" r="0.72"/>
<circle cx="504.7" cy="311.6" r="0.72"/>
<circle cx="505.5" cy="331.9" r="0.72"/>
<circle cx="679.7" cy="260.8" r="0.72"/>
<circle cx="679.7" cy="266.2" r="0.72"/>
<circle cx="679.7" cy="271.4" r="0.72"/>
<circle cx="679.7" cy="276.9" r="0.72"/>
<circle cx="679.7" cy="282.2" r="0.72"/>
<circle cx="679.7" cy="287.7" r="0.72"/>
<circle cx="679.7" cy="292.8" r="0.72"/>
<circle cx="667.3" cy="312.0" r="0.72"/>
<circle cx="667.3" cy="317.3" r="0.72"/>
<circle cx="667.3" cy="322.5" r="0.72"/>
<circle cx="667.3" cy="327.8" r="0.72"/>
<circle cx="667.3" cy="333.3" r="0.72"/>
<circle cx="555.9" cy="340.5" r="0.72"/>
<circle cx="561.4" cy="340.5" r="0.72"/>
<circle cx="566.9" cy="340.5" r="0.72"/>
<circle cx="572.2" cy="340.5" r="0.72"/>
<circle cx="577.7" cy="340.5" r="0.72"/>
<circle cx="582.8" cy="340.5" r="0.72"/>
<circle cx="588.3" cy="340.5" r="0.72"/>
<circle cx="593.4" cy="340.5" r="0.72"/>
<circle cx="668.6" cy="384.8" r="0.72"/>
<circle cx="673.9" cy="384.8" r="0.72"/>
<circle cx="679.0" cy="384.8" r="0.72"/>
<circle cx="684.2" cy="384.8" r="0.72"/>
<circle cx="269.5" cy="353.3" r="0.72"/>
<circle cx="275.0" cy="353.3" r="0.72"/>
<circle cx="280.8" cy="353.3" r="0.72"/>
<circle cx="286.7" cy="353.3" r="0.72"/>
<circle cx="371.6" cy="367.3" r="0.72"/>
<circle cx="382.8" cy="386.4" r="0.72"/>
<circle cx="461.7" cy="361.1" r="0.72"/>
<circle cx="466.9" cy="361.1" r="0.72"/>
<circle cx="524.5" cy="358.4" r="0.72"/>
<circle cx="387.8" cy="367.3" r="0.72"/>
<circle cx="388.3" cy="386.4" r="0.72"/>
<circle cx="508.6" cy="358.4" r="0.72"/>
<circle cx="434.7" cy="374.7" r="0.72"/>
<circle cx="434.7" cy="390.8" r="0.72"/>
<circle cx="440.0" cy="374.7" r="0.72"/>
<circle cx="440.0" cy="390.8" r="0.72"/>
<circle cx="445.3" cy="374.7" r="0.72"/>
<circle cx="445.3" cy="390.8" r="0.72"/>
<circle cx="450.8" cy="374.7" r="0.72"/>
<circle cx="450.8" cy="390.8" r="0.72"/>
<circle cx="456.2" cy="374.7" r="0.72"/>
<circle cx="456.2" cy="390.8" r="0.72"/>
<circle cx="461.4" cy="374.7" r="0.72"/>
<circle cx="461.4" cy="390.8" r="0.72"/>
<circle cx="466.9" cy="374.7" r="0.72"/>
<circle cx="466.9" cy="390.8" r="0.72"/>
<circle cx="472.2" cy="374.7" r="0.72"/>
<circle cx="472.2" cy="390.8" r="0.72"/>
<circle cx="502.8" cy="375.5" r="0.72"/>
<circle cx="502.8" cy="381.0" r="0.72"/>
<circle cx="502.8" cy="386.0" r="0.72"/>
<circle cx="502.8" cy="391.2" r="0.72"/>
</g>
<g fill="#efe93a" stroke="#2b4622" stroke-width="0.9"><rect x="616.9" y="137" width="5.4" height="10.8" rx="0.8"/><rect x="629.8" y="137.7" width="5.6" height="9.4" rx="2.8"/><rect x="621.6" y="150.2" width="8.6" height="5" rx="2.5"/></g>
<g fill="#4a4a40"><rect x="618.9" y="139" width="1.5" height="7"/><rect x="624" y="152" width="4" height="1.5"/></g><rect x="632.3" y="138.8" width="2.6" height="6.8" fill="#8d8d92"/>
<line x1="503.0" y1="134.4" x2="504.5" y2="131" stroke="#3a2a20" stroke-width="1.5"/><circle cx="504.70000000000005" cy="130.4" r="0.9" fill="#8a8a90"/>
<line x1="508.5" y1="134.4" x2="510.0" y2="131" stroke="#3a2a20" stroke-width="1.5"/><circle cx="510.20000000000005" cy="130.4" r="0.9" fill="#8a8a90"/>
<line x1="514.1" y1="134.4" x2="515.6" y2="131" stroke="#3a2a20" stroke-width="1.5"/><circle cx="515.8000000000001" cy="130.4" r="0.9" fill="#8a8a90"/>
<path d="M267.1 354.6 L270.1 351.8 L271.1 353.2 Z" fill="#8a5a14"/>
<path d="M272.6 354.6 L275.6 351.8 L276.6 353.2 Z" fill="#8a5a14"/>
<path d="M278.40000000000003 354.6 L281.40000000000003 351.8 L282.40000000000003 353.2 Z" fill="#8a5a14"/>
<path d="M284.3 354.6 L287.3 351.8 L288.3 353.2 Z" fill="#8a5a14"/>
<line x1="668.1" y1="384.2" x2="671.0" y2="386.6" stroke="#4a3a2a" stroke-width="1.2"/><circle cx="671.6" cy="387" r="0.7" fill="#b8b8c0"/>
<line x1="673.4" y1="384.2" x2="676.3" y2="386.6" stroke="#4a3a2a" stroke-width="1.2"/><circle cx="676.9" cy="387" r="0.7" fill="#b8b8c0"/>
<line x1="678.5" y1="384.2" x2="681.4" y2="386.6" stroke="#4a3a2a" stroke-width="1.2"/><circle cx="682" cy="387" r="0.7" fill="#b8b8c0"/>
<line x1="683.7" y1="384.2" x2="686.6" y2="386.6" stroke="#4a3a2a" stroke-width="1.2"/><circle cx="687.2" cy="387" r="0.7" fill="#b8b8c0"/>
<circle cx="555.9" cy="340.5" r="1" fill="#9fd0d8"/>
<circle cx="561.4" cy="340.5" r="1" fill="#9fd0d8"/>
<circle cx="566.9" cy="340.5" r="1" fill="#9fd0d8"/>
<circle cx="572.2" cy="340.5" r="1" fill="#9fd0d8"/>
<circle cx="577.7" cy="340.5" r="1" fill="#9fd0d8"/>
<circle cx="582.8" cy="340.5" r="1" fill="#9fd0d8"/>
<circle cx="588.3" cy="340.5" r="1" fill="#9fd0d8"/>
<circle cx="593.4" cy="340.5" r="1" fill="#9fd0d8"/>
<polygon points="630.6,174.6 733.9,175.6 732.1,242.8 629.6,242" fill="#217cf2"/>
<polygon points="629.6,242 630.6,174.6 631.4,174.6 630.4,242" fill="#1759b0"/>
<rect x="734" y="179.2" width="5.4" height="8" fill="#5d5d5d"/><rect x="732.4" y="228.6" width="5.2" height="11.4" fill="#5d5d5d"/>
<circle cx="637.6" cy="180.1" r="2" fill="#33522b"/><circle cx="636.5" cy="236.6" r="2" fill="#4a5a24"/>
<g fill="#f6f6f6" stroke="#f6f6f6" stroke-width="0.28" font-family="Liberation Sans, sans-serif" font-size="5.7" text-rendering="geometricPrecision">
<text transform="translate(195,400.1) scale(0.62,1)" textLength="367.7" lengthAdjust="spacing">THIS KIT INCLUDES NEO6M GPS ,RC522 TIME MODULE , NRF24L01 RF SENSOR , RFID SENSOR</text>
<text transform="translate(195,409.9) scale(0.62,1)" textLength="108.9" lengthAdjust="spacing">ALL RIGHTS ARE RESERVED.</text>
<text transform="translate(528,454.1) scale(0.62,1)" textLength="129.0" lengthAdjust="spacing">PICKIT3 16F877A DEVELOPER KIT.</text>
</g>
</svg></div>
<div id="panel"><div class="hd"><span>Appearance</span></div><svg width="101" height="478" viewBox="923 52 101 478" style="position:absolute;left:0;top:0">
<defs></defs>
<rect x="928.2" y="71.90" width="9" height="8" fill="#000000"/>
<ellipse cx="944" cy="76.3" rx="4.2" ry="4.3" fill="#474747"/><ellipse cx="944" cy="76.3" rx="3.1" ry="2" fill="#e2e2e2"/><circle cx="944" cy="76.3" r="1.45" fill="#a8a8a8"/>
<rect x="928.2" y="82.59" width="9" height="8" fill="#b49b00"/>
<ellipse cx="944" cy="86.99" rx="4.2" ry="4.3" fill="#474747"/><ellipse cx="944" cy="86.99" rx="3.1" ry="2" fill="#e2e2e2"/><circle cx="944" cy="86.99" r="1.45" fill="#a8a8a8"/>
<rect x="928.2" y="93.28" width="9" height="8" fill="#b49b00"/>
<ellipse cx="944" cy="97.68" rx="4.2" ry="4.3" fill="#474747"/><ellipse cx="944" cy="97.68" rx="3.1" ry="2" fill="#e2e2e2"/><circle cx="944" cy="97.68" r="1.45" fill="#a8a8a8"/>
<ellipse cx="944" cy="108.37" rx="4.2" ry="4.3" fill="#474747"/><ellipse cx="944" cy="108.37" rx="3.1" ry="2" fill="#e2e2e2"/><circle cx="944" cy="108.37" r="1.45" fill="#a8a8a8"/>
<rect x="928.2" y="114.66" width="9" height="8" fill="#808080"/>
<ellipse cx="944" cy="119.06" rx="4.2" ry="4.3" fill="#474747"/><ellipse cx="944" cy="119.06" rx="3.1" ry="2" fill="#e2e2e2"/><circle cx="944" cy="119.06" r="1.45" fill="#a8a8a8"/>
<rect x="928.2" y="125.35" width="9" height="8" fill="#f4f4f4"/>
<ellipse cx="944" cy="129.75" rx="4.2" ry="4.3" fill="#474747"/><ellipse cx="944" cy="129.75" rx="3.1" ry="2" fill="#e2e2e2"/><circle cx="944" cy="129.75" r="1.45" fill="#a8a8a8"/>
<rect x="928.2" y="136.04" width="9" height="8" fill="#f4f4f4"/>
<ellipse cx="944" cy="140.44" rx="4.2" ry="4.3" fill="#474747"/><ellipse cx="944" cy="140.44" rx="3.1" ry="2" fill="#e2e2e2"/><circle cx="944" cy="140.44" r="1.45" fill="#a8a8a8"/>
<rect x="928.2" y="146.73" width="9" height="8" fill="#2f4e3b"/>
<ellipse cx="944" cy="151.13" rx="4.2" ry="4.3" fill="#474747"/><ellipse cx="944" cy="151.13" rx="3.1" ry="2" fill="#e2e2e2"/><circle cx="944" cy="151.13" r="1.45" fill="#a8a8a8"/>
<rect x="928.2" y="157.42" width="9" height="8" fill="#2f4e3b"/>
<ellipse cx="944" cy="161.82" rx="4.2" ry="4.3" fill="#474747"/><ellipse cx="944" cy="161.82" rx="3.1" ry="2" fill="#e2e2e2"/><circle cx="944" cy="161.82" r="1.45" fill="#a8a8a8"/>
<rect x="928.2" y="168.11" width="9" height="8" fill="#fff"/><rect x="928.2" y="168.11" width="2.9" height="4" fill="#dadada"/><rect x="934.4" y="168.11" width="2.8" height="4" fill="#dadada"/><rect x="931.1" y="172.11" width="3.3" height="4" fill="#dadada"/>
<ellipse cx="944" cy="172.51" rx="4.2" ry="4.3" fill="#474747"/><ellipse cx="944" cy="172.51" rx="3.1" ry="2" fill="#e2e2e2"/><circle cx="944" cy="172.51" r="1.45" fill="#a8a8a8"/>
<rect x="928.2" y="178.80" width="9" height="8" fill="#fff"/><rect x="928.2" y="178.80" width="2.9" height="4" fill="#dadada"/><rect x="934.4" y="178.80" width="2.8" height="4" fill="#dadada"/><rect x="931.1" y="182.80" width="3.3" height="4" fill="#dadada"/>
<ellipse cx="944" cy="183.2" rx="4.2" ry="4.3" fill="#474747"/><ellipse cx="944" cy="183.2" rx="3.1" ry="2" fill="#e2e2e2"/><circle cx="944" cy="183.2" r="1.45" fill="#a8a8a8"/>
<rect x="928.2" y="189.49" width="9" height="8" fill="#fff"/><rect x="928.2" y="189.49" width="2.9" height="4" fill="#dadada"/><rect x="934.4" y="189.49" width="2.8" height="4" fill="#dadada"/><rect x="931.1" y="193.49" width="3.3" height="4" fill="#dadada"/>
<ellipse cx="944" cy="193.89" rx="4.2" ry="4.3" fill="#474747"/><ellipse cx="944" cy="193.89" rx="3.1" ry="2" fill="#e2e2e2"/><circle cx="944" cy="193.89" r="1.45" fill="#a8a8a8"/>
<rect x="928.2" y="200.18" width="9" height="8" fill="#fff"/><rect x="928.2" y="200.18" width="2.9" height="4" fill="#dadada"/><rect x="934.4" y="200.18" width="2.8" height="4" fill="#dadada"/><rect x="931.1" y="204.18" width="3.3" height="4" fill="#dadada"/>
<ellipse cx="944" cy="204.58" rx="4.2" ry="4.3" fill="#474747"/><ellipse cx="944" cy="204.58" rx="3.1" ry="2" fill="#e2e2e2"/><circle cx="944" cy="204.58" r="1.45" fill="#a8a8a8"/>
<rect x="928.2" y="210.87" width="9" height="8" fill="#c2c2c2"/>
<ellipse cx="944" cy="215.27" rx="4.2" ry="4.3" fill="#474747"/><ellipse cx="944" cy="215.27" rx="3.1" ry="2" fill="#e2e2e2"/><circle cx="944" cy="215.27" r="1.45" fill="#a8a8a8"/>
<rect x="928.2" y="221.56" width="9" height="8" fill="#4d8de0"/>
<circle cx="944" cy="225.96" r="3.6" fill="#dcdcdc" stroke="#a9a9a9" stroke-width="0.9"/><path d="M941.6 228.36L946.4 223.56" stroke="#8e8e8e" stroke-width="1"/>
<rect x="928.2" y="232.25" width="9" height="8" fill="#a9dcd0"/>
<circle cx="944" cy="236.65" r="3.6" fill="#dcdcdc" stroke="#a9a9a9" stroke-width="0.9"/><path d="M941.6 239.05L946.4 234.25" stroke="#8e8e8e" stroke-width="1"/>
<rect x="928.2" y="242.94" width="9" height="8" fill="#d9c441"/>
<circle cx="944" cy="247.34" r="3.6" fill="#dcdcdc" stroke="#a9a9a9" stroke-width="0.9"/><path d="M941.6 249.74L946.4 244.94" stroke="#8e8e8e" stroke-width="1"/>
<ellipse cx="944" cy="263.3" rx="4.2" ry="4.3" fill="#474747"/><ellipse cx="944" cy="263.3" rx="3.1" ry="2" fill="#e2e2e2"/><circle cx="944" cy="263.3" r="1.45" fill="#a8a8a8"/>
<ellipse cx="944" cy="273.99" rx="4.2" ry="4.3" fill="#474747"/><ellipse cx="944" cy="273.99" rx="3.1" ry="2" fill="#e2e2e2"/><circle cx="944" cy="273.99" r="1.45" fill="#a8a8a8"/>
<ellipse cx="944" cy="284.68" rx="4.2" ry="4.3" fill="#474747"/><ellipse cx="944" cy="284.68" rx="3.1" ry="2" fill="#e2e2e2"/><circle cx="944" cy="284.68" r="1.45" fill="#a8a8a8"/>
<ellipse cx="944" cy="295.37" rx="4.2" ry="4.3" fill="#474747"/><ellipse cx="944" cy="295.37" rx="3.1" ry="2" fill="#e2e2e2"/><circle cx="944" cy="295.37" r="1.45" fill="#a8a8a8"/>
<ellipse cx="944" cy="306.06" rx="4.2" ry="4.3" fill="#474747"/><ellipse cx="944" cy="306.06" rx="3.1" ry="2" fill="#e2e2e2"/><circle cx="944" cy="306.06" r="1.45" fill="#a8a8a8"/>
<circle cx="944" cy="316.75" r="3.6" fill="#dcdcdc" stroke="#a9a9a9" stroke-width="0.9"/><path d="M941.6 319.15L946.4 314.35" stroke="#8e8e8e" stroke-width="1"/>
<ellipse cx="944" cy="331.7" rx="4.2" ry="4.3" fill="#474747"/><ellipse cx="944" cy="331.7" rx="3.1" ry="2" fill="#e2e2e2"/><circle cx="944" cy="331.7" r="1.45" fill="#a8a8a8"/>
<ellipse cx="944" cy="342.39" rx="4.2" ry="4.3" fill="#474747"/><ellipse cx="944" cy="342.39" rx="3.1" ry="2" fill="#e2e2e2"/><circle cx="944" cy="342.39" r="1.45" fill="#a8a8a8"/>
<ellipse cx="944" cy="353.08" rx="4.2" ry="4.3" fill="#474747"/><ellipse cx="944" cy="353.08" rx="3.1" ry="2" fill="#e2e2e2"/><circle cx="944" cy="353.08" r="1.45" fill="#a8a8a8"/>
<circle cx="944" cy="363.77" r="3.6" fill="#dcdcdc" stroke="#a9a9a9" stroke-width="0.9"/><path d="M941.6 366.16999999999996L946.4 361.37" stroke="#8e8e8e" stroke-width="1"/>
<circle cx="944" cy="379.3" r="3.6" fill="#dcdcdc" stroke="#a9a9a9" stroke-width="0.9"/><path d="M941.6 381.7L946.4 376.90000000000003" stroke="#8e8e8e" stroke-width="1"/>
<rect x="928.2" y="385.70" width="9" height="8" fill="#cccce6"/>
<rect x="928.2" y="396.30" width="9" height="8" fill="#666680"/>
</svg>
<div class="row" style="top:18.90px"><span class="tx">Board Body</span></div>
<div class="row" style="top:29.59px"><span class="tx">F.Cu</span></div>
<div class="row" style="top:40.28px"><span class="tx">B.Cu</span></div>
<div class="row" style="top:50.97px"><span class="tx">Adhesive</span></div>
<div class="row" style="top:61.66px"><span class="tx">Solder Paste</span></div>
<div class="row" style="top:72.35px"><span class="tx">F.Silkscreen</span></div>
<div class="row" style="top:83.04px"><span class="tx">B.Silkscreen</span></div>
<div class="row" style="top:93.73px"><span class="tx">F.Mask</span></div>
<div class="row" style="top:104.42px"><span class="tx">B.Mask</span></div>
<div class="row" style="top:115.11px"><span class="tx">User.Drawings</span></div>
<div class="row" style="top:125.80px"><span class="tx">User.Comments</span></div>
<div class="row" style="top:136.49px"><span class="tx">User.Eco1</span></div>
<div class="row" style="top:147.18px"><span class="tx">User.Eco2</span></div>
<div class="row" style="top:157.87px"><span class="tx">User.1</span></div>
<div class="row" style="top:168.56px"><span class="tx">User.2</span></div>
<div class="row" style="top:179.25px"><span class="tx">User.3</span></div>
<div class="row" style="top:189.94px"><span class="tx">User.4</span></div>
<div class="row" style="top:205.90px"><span class="tx">Through-hole Models</span></div>
<div class="row" style="top:216.59px"><span class="tx">SMD Models</span></div>
<div class="row" style="top:227.28px"><span class="tx">Virtual Models</span></div>
<div class="row" style="top:237.97px"><span class="tx">Models not in POS File</span></div>
<div class="row" style="top:248.66px"><span class="tx">Models marked DNP</span></div>
<div class="row" style="top:259.35px"><span class="tx">Model Bounding Boxes</span></div>
<div class="row" style="top:274.30px"><span class="tx">Values</span></div>
<div class="row" style="top:284.99px"><span class="tx">References</span></div>
<div class="row" style="top:295.68px"><span class="tx">Footprint Text</span></div>
<div class="row" style="top:306.37px"><span class="tx">Off-board Silkscreen</span></div>
<div class="row" style="top:321.90px"><span class="tx">3D Axis</span></div>
<div class="row" style="top:332.70px"><span class="tx">Background Start</span></div>
<div class="row" style="top:343.30px"><span class="tx">Background End</span></div>
<div class="cb" style="top:384px;background:#0067c0;border-color:#0067c0"><svg width="8" height="8" viewBox="0 0 8 8" style="position:absolute;left:-0.7px;top:-0.7px"><path d="M1.9 4.2l1.5 1.5 2.9-3.3" fill="none" stroke="#fff" stroke-width="1"/></svg></div><div class="lb" style="top:383.5px;left:13.4px;transform:scaleX(.885)">Use board stackup colors</div>
<div class="cb" style="top:397px;background:#fbfbfb"></div><div class="lb" style="top:396.7px;left:13.4px;transform:scaleX(.885)">Use PCB editor copper colors</div>
<div style="position:absolute;left:2px;top:410px;width:97px;height:0.8px;background:#b4b4b4"></div>
<div class="lb" style="top:416.3px;left:2.8px">Presets (Ctrl+Tab):</div>
<div class="dd" style="top:428.3px"><span>---</span><svg width="6" height="4" viewBox="0 0 6 4"><path d="M.6.8L3 3.2 5.4.8" fill="none" stroke="#444" stroke-width="0.8"/></svg></div>
<div class="lb" style="top:447px;left:2.8px">Viewports (Shift+Tab):</div>
<div class="dd" style="top:459.3px"><span>---</span><svg width="6" height="4" viewBox="0 0 6 4"><path d="M.6.8L3 3.2 5.4.8" fill="none" stroke="#444" stroke-width="0.8"/></svg></div></div>
<div id="status"><span style="left:2px">Last render time 7 ms</span><i style="left:790.6px"></i><i style="left:864.8px"></i><i style="left:939.4px"></i><span style="left:793px">dx 0.00</span><span style="left:868px">dy 0.00</span><span style="left:942px">zoom 1.21</span></div>
<div id="task"><svg width="1024" height="31" viewBox="0 545 1024 31" style="position:absolute;left:0;top:0">
<defs><linearGradient id="wg" x1="0" y1="0" x2="1" y2="1"><stop offset="0" stop-color="#6fd6ff"/><stop offset="1" stop-color="#1e9be8"/></linearGradient></defs>
<rect x="416" y="553" width="7.6" height="7.6" rx="0.6" fill="url(#wg)"/>
<rect x="416" y="561.3" width="7.6" height="7.6" rx="0.6" fill="url(#wg)"/>
<rect x="424.3" y="553" width="7.6" height="7.6" rx="0.6" fill="url(#wg)"/>
<rect x="424.3" y="561.3" width="7.6" height="7.6" rx="0.6" fill="url(#wg)"/>
<defs><linearGradient id="cpa" x1="0.6" y1="0" x2="0.2" y2="1"><stop offset="0" stop-color="#1c86ea"/><stop offset="0.5" stop-color="#35c48c"/><stop offset="1" stop-color="#f4d024"/></linearGradient><linearGradient id="cpb" x1="0.7" y1="0" x2="0.3" y2="1"><stop offset="0" stop-color="#b45cf2"/><stop offset="0.55" stop-color="#f05c9c"/><stop offset="1" stop-color="#f68e38"/></linearGradient></defs>
<path d="M450.300 554h6.200q2 0 1.400 2l-2.600 6.400q-.700 1.400-2.300 1.400h-4.600q-2.200 0-1.600-2.200l1.600-6q.400-1.600 1.900-1.600z" fill="url(#cpa)"/>
<path d="M456 557.200h4.600q2 0 1.300 2.100l-2 6q-.600 1.700-2.400 1.700h-4.700q-2.200 0-1.300-1.900l3-6.600q.500-1.300 1.500-1.300z" fill="url(#cpb)"/>
<defs><linearGradient id="fg" x1="0" y1="0" x2="0" y2="1"><stop offset="0" stop-color="#ffd962"/><stop offset="1" stop-color="#f6b822"/></linearGradient></defs>
<path d="M475.200 554.300q0-.8.800-.8h4.200l1.500 1.500h9q.9 0 .9.900v2h-16.400z" fill="#e8a212"/><rect x="475.200" y="555.300" width="16.500" height="12.500" rx="1" fill="url(#fg)"/><path d="M478.100 567.800v-3q0-1 1-1h8.200q1 0 1 1v3z" fill="#1a78d2"/><rect x="479.300" y="565.200" width="7.800" height="0.900" fill="#1560b0"/>
<path d="M509 555.200v-1q0-1 1-1h5q1 0 1 1v1" fill="none" stroke="#3fb0e4" stroke-width="0.900"/><rect x="504.600" y="554.800" width="15.800" height="13.400" rx="2.200" fill="#f2f2f2"/><rect x="509.300" y="558.200" width="2.800" height="2.800" fill="#f25022"/><rect x="512.900" y="558.200" width="2.800" height="2.800" fill="#7fba00"/><rect x="509.300" y="561.800" width="2.800" height="2.800" fill="#00a4ef"/><rect x="512.900" y="561.800" width="2.800" height="2.800" fill="#ffb900"/>
<circle cx="541.8" cy="560.5" r="8.200" fill="#e33b2e"/><path d="M541.8 560.5L534.6999999999999 556.4A8.200 8.200 0 0 0 540.3 568.56z" fill="#2da94f"/><path d="M541.8 560.5L540.3 568.56A8.200 8.200 0 0 0 550.0 559.9z" fill="#fcc31e"/><path d="M534.6999999999999 556.4A8.200 8.200 0 0 1 550.0 559.9L541.8 559.9z" fill="#e33b2e"/><circle cx="541.8" cy="560.5" r="3.900" fill="#fff"/><circle cx="541.8" cy="560.5" r="3" fill="#3f86ee"/>
<rect x="539.8" y="571.600" width="4" height="1.400" rx="0.700" fill="#8a8a8a"/>
<rect x="564.500" y="553.600" width="13.800" height="14.100" rx="0.500" fill="#fbd10d"/><path d="M571.900 561.200h6.400l-6.400 6.500z" fill="#4a4a4a"/><path d="M578.300 561.200v6.500h-6.400z" fill="#e9b20e"/><rect x="569.400" y="571.600" width="4" height="1.400" rx="0.700" fill="#8a8a8a"/>
<rect x="587.500" y="547.600" width="26.200" height="25.800" rx="2" fill="#2c2c2c"/><rect x="593" y="553" width="15" height="15" rx="2.600" fill="#2c3eb8"/><text x="594.600" y="565" font-family="Liberation Sans,sans-serif" font-weight="bold" font-size="10.500" fill="#fff">Ki</text><circle cx="604.700" cy="556.600" r="0.900" fill="#f0883a"/><rect x="595.400" y="571.500" width="10.400" height="1.500" rx="0.700" fill="#dca4e4"/>
<path d="M903.400 562.300l3.600-3.600 3.600 3.600" fill="none" stroke="#eee" stroke-width="1.100"/>
<path d="M925 563.500h6.800a2.200 2.200 0 0 0 .400-4.300 3.500 3.500 0 0 0-6.600-.800 2.600 2.600 0 0 0-.600 5.100z" fill="#787878"/><path d="M923.800 556.300l9.200 8" stroke="#b4b4b4" stroke-width="0.900"/>
<g fill="none" stroke="#f0f0f0" stroke-width="1"><path d="M943.800 558.800a8 8 0 0 1 11.400 0"/><path d="M945.700 560.900a5.400 5.400 0 0 1 7.600 0"/><path d="M947.600 563a2.700 2.700 0 0 1 3.800 0"/></g><circle cx="949.500" cy="564.600" r="0.900" fill="#f0f0f0"/>
<path d="M960.600 559h2l2.800-2.400v8l-2.800-2.400h-2z" fill="none" stroke="#f0f0f0" stroke-width="0.900"/><path d="M967 558.200a3.400 3.400 0 0 1 0 4.800" fill="none" stroke="#f0f0f0" stroke-width="0.800"/><path d="M968.800 556.600a5.600 5.600 0 0 1 0 8" fill="none" stroke="#777" stroke-width="0.800"/>
<rect x="976.300" y="557.300" width="12.400" height="6.600" rx="1.800" fill="none" stroke="#f0f0f0" stroke-width="0.900"/><rect x="977.700" y="558.700" width="5.400" height="3.800" rx="0.800" fill="#f0f0f0"/><path d="M989.700 559.500v2.200" stroke="#f0f0f0" stroke-width="1"/>
<path d="M1001.500 563.400q1-.8 1-3.200v-1.200a3.300 3.300 0 0 1 6.600 0v1.200q0 2.400 1 3.200z" fill="#efb6f3"/><rect x="1004.500" y="564" width="2.600" height="1.700" rx="0.800" fill="#efb6f3"/>
</svg></div>
</body></html>
